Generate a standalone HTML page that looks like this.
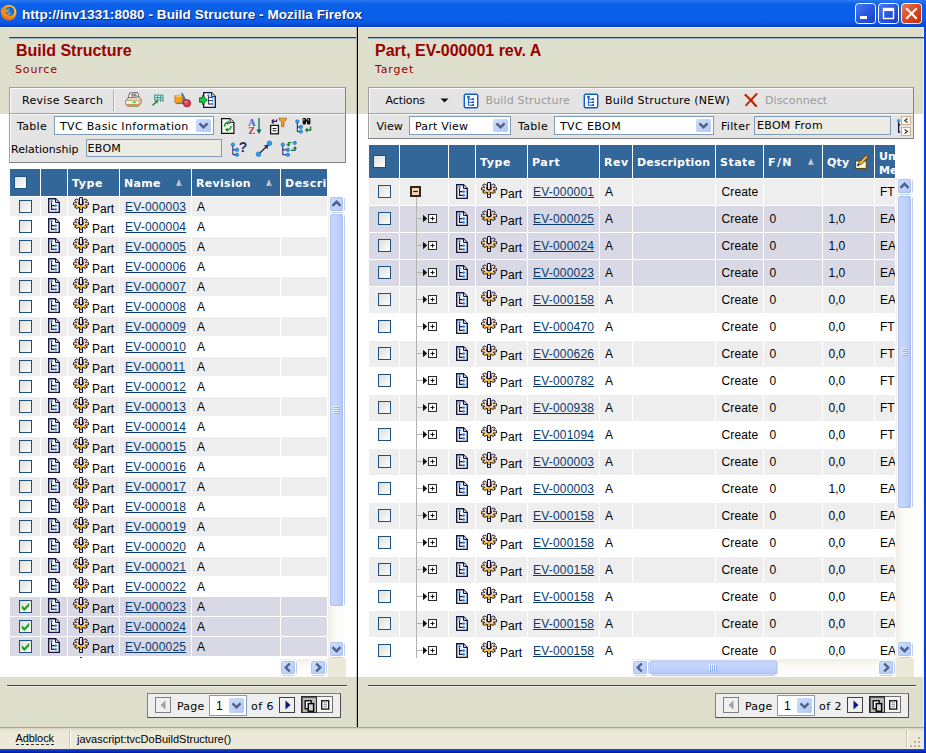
<!DOCTYPE html>
<html><head><meta charset="utf-8"><title>Build Structure - Mozilla Firefox</title>
<style>
html,body{margin:0;padding:0;background:#fff;}
#win{position:relative;width:926px;height:753px;overflow:hidden;background:#fff;font-family:"Liberation Sans",sans-serif;font-size:12px;color:#000;}
.t{position:absolute;white-space:nowrap;line-height:14px;}
.v{font-family:"DejaVu Sans","Liberation Sans",sans-serif;font-size:11px;}
.vb{font-family:"DejaVu Sans","Liberation Sans",sans-serif;font-size:11px;font-weight:bold;color:#fff;}
.a{font-family:"Liberation Sans",sans-serif;font-size:12px;}
.lnk{color:#083A70;text-decoration:underline;}
.dis{color:#9A9A9A;}
svg{display:block;overflow:visible}
</style></head><body><div id="win">

<svg width="0" height="0" style="position:absolute">
<defs>
<linearGradient id="gcb" x1="0" y1="0" x2="1" y2="1"><stop offset="0" stop-color="#DCDCD7"/><stop offset="1" stop-color="#FFFFFF"/></linearGradient>
<linearGradient id="gsb" x1="0" y1="0" x2="1" y2="0"><stop offset="0" stop-color="#C9D7FC"/><stop offset="0.5" stop-color="#C3D3FD"/><stop offset="1" stop-color="#B4C6F6"/></linearGradient>
<linearGradient id="gsbh" x1="0" y1="0" x2="0" y2="1"><stop offset="0" stop-color="#C9D7FC"/><stop offset="0.5" stop-color="#C3D3FD"/><stop offset="1" stop-color="#B4C6F6"/></linearGradient>
<linearGradient id="gbtn" x1="0" y1="0" x2="1" y2="1"><stop offset="0" stop-color="#CFDDFD"/><stop offset="0.5" stop-color="#C1D2FB"/><stop offset="1" stop-color="#B4C8F7"/></linearGradient>
<linearGradient id="gwb" x1="0" y1="0" x2="1" y2="1"><stop offset="0" stop-color="#4C7CF2"/><stop offset="0.5" stop-color="#2858E2"/><stop offset="1" stop-color="#1A3CC4"/></linearGradient>
<linearGradient id="gwc" x1="0" y1="0" x2="1" y2="1"><stop offset="0" stop-color="#EC8060"/><stop offset="0.45" stop-color="#DE4A22"/><stop offset="1" stop-color="#C02C08"/></linearGradient>
<radialGradient id="gff" cx="0.7" cy="0.3" r="0.9"><stop offset="0" stop-color="#FFD848"/><stop offset="0.45" stop-color="#F59A20"/><stop offset="1" stop-color="#D8500C"/></radialGradient>

<symbol id="cb" viewBox="0 0 13 13"><rect x="0.5" y="0.5" width="12" height="12" fill="url(#gcb)" stroke="#1C5180"/></symbol>
<symbol id="cbc" viewBox="0 0 13 13"><rect x="0.5" y="0.5" width="12" height="12" fill="url(#gcb)" stroke="#1C5180"/><path d="M2.8 5.2 L5.4 7.8 L10.2 2.8 V6 L5.4 11 L2.8 8.4 Z" fill="#1FA41F"/></symbol>
<symbol id="cbh" viewBox="0 0 13 13"><rect x="0.5" y="0.5" width="12" height="12" fill="url(#gcb)" stroke="#FFFFFF" stroke-opacity="0.9"/><rect x="0" y="0" width="13" height="13" fill="none" stroke="#5580AA" stroke-width="0.6"/></symbol>

<symbol id="doc" viewBox="0 0 12 15">
<path d="M0.7 0.7 H7.5 L11.3 4.5 V14.3 H0.7 Z" fill="#F6F6F6" stroke="#15153C" stroke-width="1.35" stroke-linejoin="miter"/>
<path d="M7.5 0.75 V4.5 H11.25" fill="#C8C8D8" stroke="#15153C" stroke-width="1"/>
<path d="M3.5 4 V11.4 H7 M3.5 7.6 H7" fill="none" stroke="#15153C" stroke-width="1.1"/>
<path d="M3.5 1.7 L5 3.3 L3.5 4.9 L2 3.3 Z M7.8 6 L9.4 7.6 L7.8 9.2 L6.2 7.6 Z M7.8 9.8 L9.4 11.4 L7.8 13 L6.2 11.4 Z" fill="#1E8CFF"/>
</symbol>

<symbol id="gear" viewBox="0 0 16 16">
<defs><radialGradient id="gg" gradientUnits="userSpaceOnUse" cx="0" cy="-3" r="9.6"><stop offset="0" stop-color="#FDE0BC"/><stop offset="0.68" stop-color="#FBD6A2"/><stop offset="0.84" stop-color="#F4BA1C"/><stop offset="1" stop-color="#F0B008"/></radialGradient></defs>
<g transform="translate(8 6.7) scale(1 0.76)">
<path d="M4.31 -5.87 L5.87 -4.31 L3.25 -1.27 L1.27 -3.25 Z M7.20 -1.10 L7.20 1.10 L3.20 1.40 L3.20 -1.40 Z M5.87 4.31 L4.31 5.87 L1.27 3.25 L3.25 1.27 Z M1.10 7.20 L-1.10 7.20 L-1.40 3.20 L1.40 3.20 Z M-4.31 5.87 L-5.87 4.31 L-3.25 1.27 L-1.27 3.25 Z M-7.20 1.10 L-7.20 -1.10 L-3.20 -1.40 L-3.20 1.40 Z M-5.87 -4.31 L-4.31 -5.87 L-1.27 -3.25 L-3.25 -1.27 Z" fill="#0C0C38" stroke="#0C0C38" stroke-width="1.7" stroke-linejoin="round"/>
<circle r="4.2" fill="#0C0C38" stroke="#0C0C38" stroke-width="1.7"/>
<path d="M4.31 -5.87 L5.87 -4.31 L3.25 -1.27 L1.27 -3.25 Z M7.20 -1.10 L7.20 1.10 L3.20 1.40 L3.20 -1.40 Z M5.87 4.31 L4.31 5.87 L1.27 3.25 L3.25 1.27 Z M1.10 7.20 L-1.10 7.20 L-1.40 3.20 L1.40 3.20 Z M-4.31 5.87 L-5.87 4.31 L-3.25 1.27 L-1.27 3.25 Z M-7.20 1.10 L-7.20 -1.10 L-3.20 -1.40 L-3.20 1.40 Z M-5.87 -4.31 L-4.31 -5.87 L-1.27 -3.25 L-3.25 -1.27 Z" fill="url(#gg)"/>
<circle r="4.2" fill="url(#gg)"/>
<path d="M-2.7 -3 V0.2 A2.7 2.3000000000000003 0 0 0 2.7 0.2 V-3 Z" fill="#0C0C38"/>
</g>
<rect x="6" y="0" width="4" height="8" rx="1.2" fill="#0C0C38"/>
<rect x="7" y="1" width="2" height="6" fill="#D0DCF6"/>
<rect x="7" y="1" width="0.9" height="6" fill="#F2F5FC"/>
<rect x="6" y="10.8" width="4" height="5.2" rx="1" fill="#0C0C38"/>
<rect x="7" y="9" width="2" height="3.4" fill="#F4BA1C"/>
<rect x="7" y="13" width="2" height="2" fill="#D4E0F8"/>
</symbol>

<symbol id="minus" viewBox="0 0 11 11"><rect x="1" y="1" width="9" height="9" fill="#FAD8B0" stroke="#2A2A2A" stroke-width="2"/><rect x="3.2" y="4.9" width="4.6" height="1.2" fill="#1A1A1A"/></symbol>
<symbol id="plus" viewBox="0 0 14 9"><path d="M0 0.8 L4.2 4.5 L0 8.2 Z" fill="#111"/><rect x="5.5" y="0.5" width="8" height="8" fill="#FFF" stroke="#2A2A2A" stroke-width="1"/><path d="M7.5 4.5 H11.5 M9.5 2.5 V6.5" stroke="#111" stroke-width="1"/></symbol>

<symbol id="sbu" viewBox="0 0 17 17"><rect x="0.5" y="0.5" width="16" height="16" rx="2" fill="url(#gbtn)" stroke="#FFFFFF"/><rect x="1" y="1" width="15" height="15" rx="2" fill="none" stroke="#B0C4F4" stroke-width="0.8"/><path d="M4.5 10.5 L8.5 6.5 L12.5 10.5" fill="none" stroke="#4D6185" stroke-width="2"/></symbol>
<symbol id="bs" viewBox="0 0 16 16"><path d="M2 0.6 H14 L15.4 2 V14 L14 15.4 H2 L0.6 14 V2 Z" fill="#0A5BCE"/><rect x="2" y="2" width="12" height="12" fill="#FFFFFF"/><path d="M5.3 4 V12.2 H10 M5.3 6.2 H10 M5.3 9.2 H10" fill="none" stroke="#0A4FC0" stroke-width="1"/><rect x="4" y="3.2" width="3" height="1.5" fill="#0A4FC0"/><rect x="9.3" y="5.3" width="1.8" height="1.8" fill="#0A4FC0"/><rect x="9.3" y="8.3" width="1.8" height="1.8" fill="#0A4FC0"/><rect x="9.3" y="11.2" width="1.8" height="1.8" fill="#0A4FC0"/></symbol>
<symbol id="redx" viewBox="0 0 14 14"><path d="M1.5 2 L7 7.2 L12 13" stroke="#CC2200" stroke-width="2.3" fill="none" stroke-linecap="round"/><path d="M12.6 1 L2.2 12.2" stroke="#CC2200" stroke-width="1.9" fill="none" stroke-linecap="round"/></symbol>
</defs></svg>
<div style="position:absolute;left:0px;top:0px;width:926px;height:27px;background:linear-gradient(to bottom,#2A78F0 0%,#1A6CF0 8%,#0A60EA 16%,#0A5EE8 60%,#0B5CE6 78%,#0A52DC 88%,#0A46CC 96%,#0A40C4 100%);"></div><svg style="position:absolute;left:0px;top:4px" width="17" height="17" viewBox="0 0 17 17"><circle cx="8.6" cy="8.6" r="7.9" fill="url(#gff)"/><circle cx="9.6" cy="7.4" r="4.7" fill="#2468C8"/><path d="M8 3.5 C9.5 4.5 10.5 6 9.5 8 C11 8 12 9 11.5 10.5 C10 11.5 8 11 7.5 9.5 C6.5 8 7 5 8 3.5 Z" fill="#3C9CE0"/><path d="M0.8 6 L2 3.2 L3.6 4.6 L5.6 3 L6.2 5.2 C7.8 5.6 8.6 7 8 8.4 C7 8 6 8.2 5.6 9 C6.6 10.2 8.6 10.6 10.4 9.8 C9.6 12 7 13 4.6 12.2 C2 11.2 0.4 8.6 0.8 6 Z" fill="#F08A1C"/><path d="M12.5 2 C15.5 4 16.6 8 15 11.5 C15.6 8.5 14.6 5 12.5 2 Z" fill="#FFD640"/></svg><span class="t " style="left:22px;top:7px;font-family:'Liberation Sans',sans-serif;font-weight:bold;font-size:13.5px;color:#fff;line-height:16px;letter-spacing:0.06px;text-shadow:1px 1px 0 #0A2A80;">http://inv1331:8080 - Build Structure - Mozilla Firefox</span><svg style="position:absolute;left:855px;top:3px" width="21" height="21" viewBox="0 0 21 21"><rect x="0.5" y="0.5" width="20" height="20" rx="3" fill="url(#gwb)" stroke="#FFFFFF"/><rect x="5" y="13" width="7" height="3" fill="#fff"/></svg><svg style="position:absolute;left:878px;top:3px" width="21" height="21" viewBox="0 0 21 21"><rect x="0.5" y="0.5" width="20" height="20" rx="3" fill="url(#gwb)" stroke="#FFFFFF"/><rect x="5.5" y="5.5" width="10" height="10" fill="none" stroke="#fff" stroke-width="1.4"/><rect x="5" y="5" width="11" height="3" fill="#fff"/></svg><svg style="position:absolute;left:901px;top:3px" width="21" height="21" viewBox="0 0 21 21"><rect x="0.5" y="0.5" width="20" height="20" rx="3" fill="url(#gwc)" stroke="#FFFFFF"/><path d="M6 6 L15 15 M15 6 L6 15" stroke="#fff" stroke-width="2.2" stroke-linecap="square"/></svg><div style="position:absolute;left:0px;top:27px;width:924px;height:87px;background:#DDDECC;border-top:1px solid #F1EFDC;box-sizing:border-box;"></div><div style="position:absolute;left:0px;top:677px;width:924px;height:50px;background:#DDDECC;"></div><div style="position:absolute;left:356px;top:27px;width:1px;height:700px;background:rgba(0,0,0,0.18);"></div><div style="position:absolute;left:357px;top:27px;width:1px;height:700px;background:#000;"></div><div style="position:absolute;left:923px;top:27px;width:1px;height:722px;background:#F4F1DC;"></div><div style="position:absolute;left:924px;top:27px;width:2px;height:726px;background:#0A3FE0;"></div><div style="position:absolute;left:0px;top:749px;width:926px;height:4px;background:linear-gradient(to bottom,#1A56F0,#0A32C8 40%,#001A9A);"></div><div style="position:absolute;left:9px;top:37px;width:347px;height:1px;background:#1A4A78;border-bottom:1px solid #9AB0C4;"></div><div style="position:absolute;left:368px;top:37px;width:556px;height:1px;background:#1A4A78;border-bottom:1px solid #9AB0C4;"></div><div style="position:absolute;left:7px;top:685px;width:340px;height:1px;background:#1A4A78;border-bottom:1px solid #F4F4EC;"></div><div style="position:absolute;left:368px;top:685px;width:548px;height:1px;background:#1A4A78;border-bottom:1px solid #F4F4EC;"></div><span class="t " style="left:16px;top:42px;font-family:'Liberation Sans',sans-serif;font-weight:bold;font-size:16px;color:#990000;line-height:18px;">Build Structure</span><span class="t v" style="left:15px;top:63px;color:#990000;letter-spacing:0.85px;">Source</span><span class="t " style="left:375px;top:42px;font-family:'Liberation Sans',sans-serif;font-weight:bold;font-size:16px;color:#990000;line-height:18px;">Part, EV-000001 rev. A</span><span class="t v" style="left:375px;top:63px;color:#990000;letter-spacing:0.85px;">Target</span><div style="position:absolute;left:9px;top:87px;width:337px;height:27px;background:#E4E4E4;border:1px solid #A0A0A0;border-bottom-color:#808080;border-right-color:#808080;box-sizing:border-box;box-shadow:inset 1px 1px 0 #FAFAFA;"></div><div style="position:absolute;left:9px;top:113px;width:337px;height:50px;background:#E4E4E4;border:1px solid #A0A0A0;border-bottom-color:#808080;border-right-color:#808080;box-sizing:border-box;box-shadow:inset 1px 1px 0 #FAFAFA;"></div><div style="position:absolute;left:113px;top:90px;width:1px;height:21px;background:#B0B0B0;border-right:1px solid #F8F8F8;"></div><span class="t v" style="left:22px;top:94px;letter-spacing:0.3px;">Revise Search</span><span class="t v" style="left:17px;top:120px;letter-spacing:0.3px;">Table</span><span class="t v" style="left:11px;top:143px;">Relationship</span><div style="position:absolute;left:54px;top:116px;width:160px;height:19px;background:#fff;border:1px solid #7F9DB9;box-sizing:border-box;"></div><span class="t v" style="left:60px;top:120px;letter-spacing:0.33px;">TVC Basic Information</span><svg style="position:absolute;left:196px;top:119px" width="15" height="13" viewBox="0 0 15 13"><rect x="0" y="0" width="15" height="13" rx="1.5" fill="url(#gbtn)"/><path d="M3.5 4.3 L7.5 8.3 L11.5 4.3" fill="none" stroke="#4D6185" stroke-width="2.5"/></svg><div style="position:absolute;left:86px;top:139px;width:136px;height:18px;background:#ECEBE4;border:1px solid #7F9DB9;box-sizing:border-box;"></div><span class="t v" style="left:87.5px;top:142px;letter-spacing:0.3px;">EBOM</span><svg style="position:absolute;left:125px;top:92px" width="17" height="15" viewBox="0 0 17 15"><path d="M4.6 1 L12.4 0.5 L14.2 5 L3.2 5.8 Z" fill="#FFFFFF" stroke="#444" stroke-width="0.8"/><path d="M6.4 2.4 L11.2 2.1 M6 4 L11.8 3.7" stroke="#333" stroke-width="0.8"/><path d="M0.7 8.6 L3.2 5.8 L14.2 5 L16.4 7.4 L16.4 10.6 L13.6 14.3 L2.6 14.3 L0.7 12 Z" fill="#EAD9B8" stroke="#8A6A3A" stroke-width="0.8" stroke-linejoin="round"/><path d="M0.9 8.8 H13.4 L16.2 7.5" fill="none" stroke="#8A6A3A" stroke-width="0.6"/><path d="M1.2 9 H13.4 V11.8 H1.2 Z" fill="#F2F2EE"/><path d="M13.5 9 L16.2 7.7 V10.5 L13.5 11.8 Z" fill="#D8C4A0"/><rect x="7.6" y="9.6" width="3.2" height="1.5" fill="#22CC44"/><path d="M1 12 H13.5 L16.2 10.6 L13.6 14.2 H2.7 Z" fill="#C9975C"/></svg><svg style="position:absolute;left:152px;top:94px" width="12" height="12" viewBox="0 0 12 12"><rect x="2" y="0.6" width="9.4" height="7.4" fill="#E6F4F0"/><path d="M2 1.2 H11.4 M2 3.6 H11.4 M2 6 H11.4 M2.6 0.6 V6.6 M5.6 0.6 V8 M8.6 0.6 V8 M11 0.6 V8" stroke="#4FA394" stroke-width="1.2" fill="none"/><path d="M0.6 11.4 L5 7" stroke="#1F7A3A" stroke-width="1.4"/><path d="M2.4 6.4 H5.6 V9.6 Z" fill="#1F7A3A"/></svg><svg style="position:absolute;left:174px;top:92px" width="18" height="16" viewBox="0 0 18 16"><path d="M8 0.8 L12.6 9 L8 12 Z" fill="#2E86D0" stroke="#1A4A90" stroke-width="0.5"/><path d="M8 0.8 L8 12 L5.5 9 Z" fill="#60B0E8"/><path d="M0.8 3.6 L6.8 3 L8.6 4.6 V10.6 L2.6 11.2 L0.8 9.6 Z" fill="#F5A21A" stroke="#B06A08" stroke-width="0.6"/><path d="M0.8 3.6 L6.8 3 L8.6 4.6 L2.6 5.2 Z" fill="#FBC65A"/><path d="M0.8 9.6 L2.6 11.2 L8.6 10.6 L8.6 11.6 L2.8 12.2 L0.8 10.4 Z" fill="#3A78C8"/><circle cx="13" cy="11.2" r="3.7" fill="#E23A50" stroke="#8E1424" stroke-width="0.7"/><circle cx="12" cy="10" r="1.3" fill="#F08A98"/></svg><svg style="position:absolute;left:199px;top:92px" width="18" height="16" viewBox="0 0 18 16"><path d="M4.7 0.7 H12.5 L16.3 4.5 V15.3 H4.7 Z" fill="#F8F8F8" stroke="#15153C" stroke-width="1.3"/><path d="M12.5 0.7 V4.5 H16.3" fill="#D0D0DC" stroke="#15153C" stroke-width="0.9"/><path d="M9.4 3.6 V12.4 M9.4 5.4 H13 M9.4 8.6 H13 M9.4 12 H13" fill="none" stroke="#15153C" stroke-width="0.9"/><path d="M9.4 2 L10.7 3.3 L9.4 4.6 L8.1 3.3 Z M13.4 4.1 L14.7 5.4 L13.4 6.7 L12.1 5.4 Z M13.4 7.3 L14.7 8.6 L13.4 9.9 L12.1 8.6 Z M13.4 10.7 L14.7 12 L13.4 13.3 L12.1 12 Z" fill="#1E8CFF"/><path d="M0.6 5.8 H3.6 V3.2 L8.2 8 L3.6 12.8 V10.2 H0.6 Z" fill="#1CCB3A" stroke="#0C5A1A" stroke-width="0.9" stroke-linejoin="round"/></svg><svg style="position:absolute;left:221px;top:118px" width="14" height="16" viewBox="0 0 14 16"><path d="M0.6 0.6 H9 L12.9 4.5 V15.4 H0.6 Z" fill="#FAFAFA" stroke="#111" stroke-width="1.2"/><path d="M9 0.6 V4.5 H12.9" fill="#D8D8D8" stroke="#111" stroke-width="0.8"/><path d="M3.6 8.6 A3.1 3.3 0 0 1 7.4 4.8 M9.8 8 A3.1 3.3 0 0 1 6 11.8" fill="none" stroke="#16A024" stroke-width="1.7"/><path d="M6.6 2.6 L9.6 5.2 L6.2 7 Z M6.8 14 L3.8 11.4 L7.2 9.6 Z" fill="#16A024"/></svg><svg style="position:absolute;left:248px;top:117px" width="15" height="18" viewBox="0 0 15 18"><text x="0" y="8.6" font-family="Liberation Serif,serif" font-weight="bold" font-size="10.5" fill="#3D62DD">A</text><text x="0.3" y="17" font-family="Liberation Serif,serif" font-weight="bold" font-size="10.5" fill="#CC3344">Z</text><path d="M11 1 V15.5" stroke="#0A6A5A" stroke-width="1.3"/><path d="M8.4 12.6 L11 17 L13.6 12.6 Z" fill="#0A6A5A"/></svg><svg style="position:absolute;left:269px;top:117px" width="19" height="18" viewBox="0 0 19 18"><rect x="1.6" y="8.4" width="7.8" height="8.4" fill="#fff" stroke="#111" stroke-width="1.3"/><path d="M3.6 11.6 H7.4 M3.6 13.8 H7.4" stroke="#111" stroke-width="1"/><path d="M2.6 4.4 H8 M2.6 4.4 L4.8 2.4 M2.6 4.4 L4.8 6.4 M7.6 2.4 V4.4" stroke="#3A1A7A" stroke-width="1.3" fill="none"/><path d="M10 1.2 H17.4 V2.8 L15 4.6 V9.6 H12.6 V4.6 L10 2.8 Z" fill="#F2A030" stroke="#9A5E10" stroke-width="0.7"/></svg><svg style="position:absolute;left:295px;top:117px" width="18" height="18" viewBox="0 0 18 18"><path d="M2.3 4.5 V14.6 H5.7 M2.3 10 H5.7" fill="none" stroke="#1A1A6A" stroke-width="1"/><circle cx="2.3" cy="4.5" r="1.7" fill="#22A4F4" stroke="#1458B8" stroke-width="0.6"/><circle cx="5.9" cy="10" r="1.7" fill="#22A4F4" stroke="#1458B8" stroke-width="0.6"/><circle cx="5.9" cy="14.6" r="1.7" fill="#22A4F4" stroke="#1458B8" stroke-width="0.6"/><rect x="7.6" y="1" width="3.4" height="6.4" rx="0.8" fill="#111"/><rect x="12" y="1" width="3.4" height="6.4" rx="0.8" fill="#111"/><rect x="10" y="2.4" width="3" height="2.4" fill="#111"/><rect x="8.4" y="2" width="1" height="1.6" fill="#ddd"/><rect x="12.8" y="2" width="1" height="1.6" fill="#ddd"/><path d="M15.6 9.6 V13 H11" fill="none" stroke="#1A7A2A" stroke-width="1.4"/><path d="M12.6 10.6 L9.8 13 L12.6 15.4 Z" fill="#1A7A2A"/></svg><svg style="position:absolute;left:231px;top:140px" width="18" height="18" viewBox="0 0 18 18"><path d="M1.9 4.6 V14.8 H5.8 M1.9 9.8 H5.8" fill="none" stroke="#1A1A6A" stroke-width="1"/><circle cx="1.9" cy="4.6" r="1.7" fill="#22A4F4" stroke="#1458B8" stroke-width="0.6"/><circle cx="6" cy="9.8" r="1.7" fill="#22A4F4" stroke="#1458B8" stroke-width="0.6"/><circle cx="6" cy="14.8" r="1.7" fill="#22A4F4" stroke="#1458B8" stroke-width="0.6"/><text x="7.8" y="11.6" font-family="Liberation Sans,sans-serif" font-weight="bold" font-size="14" fill="#2A2A70">?</text></svg><svg style="position:absolute;left:255px;top:140px" width="18" height="18" viewBox="0 0 18 18"><path d="M3.6 14.4 L13 5" stroke="#111" stroke-width="1.2"/><path d="M8.6 5.6 L13.6 4.4 L12.4 9.4 L11 7 Z" fill="#1A2A9A"/><circle cx="3.5" cy="14.3" r="2.3" fill="#22A4F4" stroke="#1458B8" stroke-width="0.6"/><circle cx="14.5" cy="3.3" r="2.3" fill="#22A4F4" stroke="#1458B8" stroke-width="0.6"/></svg><svg style="position:absolute;left:281px;top:140px" width="18" height="18" viewBox="0 0 18 18"><path d="M1.8 4.6 V14.8 H6.6 M1.8 9.8 H6.6" fill="none" stroke="#1A1A6A" stroke-width="1"/><circle cx="1.8" cy="4.6" r="1.7" fill="#22A4F4" stroke="#1458B8" stroke-width="0.6"/><circle cx="6.9" cy="9.8" r="1.7" fill="#22A4F4" stroke="#1458B8" stroke-width="0.6"/><circle cx="6.9" cy="14.8" r="1.7" fill="#22A4F4" stroke="#1458B8" stroke-width="0.6"/><circle cx="13.8" cy="2.9" r="1.6" fill="#22A4F4" stroke="#1458B8" stroke-width="0.6"/><path d="M10.6 2.6 H7.4 V5" stroke="#1A7A3A" stroke-width="1.3" fill="none"/><path d="M5.2 4.2 H9.6 L7.4 6.8 Z" fill="#1A7A3A"/><path d="M10 10.4 H14 V8.6" stroke="#0A6A4A" stroke-width="1.3" fill="none"/><path d="M11.8 8.8 H16.2 L14 6.2 Z" fill="#0A6A4A"/></svg><div style="position:absolute;left:10px;top:169px;width:30px;height:27px;background:#336699;"></div><div style="position:absolute;left:41px;top:169px;width:26px;height:27px;background:#336699;"></div><div style="position:absolute;left:68px;top:169px;width:51px;height:27px;background:#336699;"></div><div style="position:absolute;left:120px;top:169px;width:71px;height:27px;background:#336699;"></div><div style="position:absolute;left:192px;top:169px;width:88px;height:27px;background:#336699;"></div><div style="position:absolute;left:281px;top:169px;width:46px;height:27px;background:#336699;"></div><svg style="position:absolute;left:14px;top:176px" width="13" height="13" ><use href="#cb"/></svg><span class="t vb" style="left:72px;top:177px;letter-spacing:0.6px;">Type</span><span class="t vb" style="left:124px;top:177px;letter-spacing:0.3px;">Name</span><span class="t vb" style="left:196px;top:177px;letter-spacing:0.3px;">Revision</span><span class="t vb" style="left:285px;top:177px;letter-spacing:0.5px;">Descri</span><svg style="position:absolute;left:176px;top:179px" width="6" height="7" viewBox="0 0 6 7"><path d="M3 0.3 L5.8 6.8 H0.2 Z" fill="#D4D4D0"/><path d="M3 0.3 L5.8 6.8 H3.6 Z" fill="#A8A8A8"/></svg><svg style="position:absolute;left:266px;top:179px" width="6" height="7" viewBox="0 0 6 7"><path d="M3 0.3 L5.8 6.8 H0.2 Z" fill="#D4D4D0"/><path d="M3 0.3 L5.8 6.8 H3.6 Z" fill="#A8A8A8"/></svg><div style="position:absolute;left:10px;top:197px;width:30px;height:19px;background:#EEEEEE;"></div><div style="position:absolute;left:41px;top:197px;width:26px;height:19px;background:#EEEEEE;"></div><div style="position:absolute;left:68px;top:197px;width:51px;height:19px;background:#EEEEEE;"></div><div style="position:absolute;left:120px;top:197px;width:71px;height:19px;background:#EEEEEE;"></div><div style="position:absolute;left:192px;top:197px;width:88px;height:19px;background:#EEEEEE;"></div><div style="position:absolute;left:281px;top:197px;width:46px;height:19px;background:#EEEEEE;"></div><svg style="position:absolute;left:19px;top:200px" width="13" height="13" ><use href="#cb"/></svg><svg style="position:absolute;left:48px;top:198px" width="12" height="15" ><use href="#doc"/></svg><svg style="position:absolute;left:73px;top:197px" width="16" height="16" ><use href="#gear"/></svg><span class="t a" style="left:92px;top:202px;">Part</span><span class="t a lnk" style="left:125px;top:200px;letter-spacing:0.2px;">EV-000003</span><span class="t a" style="left:197px;top:200px;">A</span><div style="position:absolute;left:10px;top:217px;width:30px;height:19px;background:#FFFFFF;"></div><div style="position:absolute;left:41px;top:217px;width:26px;height:19px;background:#FFFFFF;"></div><div style="position:absolute;left:68px;top:217px;width:51px;height:19px;background:#FFFFFF;"></div><div style="position:absolute;left:120px;top:217px;width:71px;height:19px;background:#FFFFFF;"></div><div style="position:absolute;left:192px;top:217px;width:88px;height:19px;background:#FFFFFF;"></div><div style="position:absolute;left:281px;top:217px;width:46px;height:19px;background:#FFFFFF;"></div><svg style="position:absolute;left:19px;top:220px" width="13" height="13" ><use href="#cb"/></svg><svg style="position:absolute;left:48px;top:218px" width="12" height="15" ><use href="#doc"/></svg><svg style="position:absolute;left:73px;top:217px" width="16" height="16" ><use href="#gear"/></svg><span class="t a" style="left:92px;top:222px;">Part</span><span class="t a lnk" style="left:125px;top:220px;letter-spacing:0.2px;">EV-000004</span><span class="t a" style="left:197px;top:220px;">A</span><div style="position:absolute;left:10px;top:237px;width:30px;height:19px;background:#EEEEEE;"></div><div style="position:absolute;left:41px;top:237px;width:26px;height:19px;background:#EEEEEE;"></div><div style="position:absolute;left:68px;top:237px;width:51px;height:19px;background:#EEEEEE;"></div><div style="position:absolute;left:120px;top:237px;width:71px;height:19px;background:#EEEEEE;"></div><div style="position:absolute;left:192px;top:237px;width:88px;height:19px;background:#EEEEEE;"></div><div style="position:absolute;left:281px;top:237px;width:46px;height:19px;background:#EEEEEE;"></div><svg style="position:absolute;left:19px;top:240px" width="13" height="13" ><use href="#cb"/></svg><svg style="position:absolute;left:48px;top:238px" width="12" height="15" ><use href="#doc"/></svg><svg style="position:absolute;left:73px;top:237px" width="16" height="16" ><use href="#gear"/></svg><span class="t a" style="left:92px;top:242px;">Part</span><span class="t a lnk" style="left:125px;top:240px;letter-spacing:0.2px;">EV-000005</span><span class="t a" style="left:197px;top:240px;">A</span><div style="position:absolute;left:10px;top:257px;width:30px;height:19px;background:#FFFFFF;"></div><div style="position:absolute;left:41px;top:257px;width:26px;height:19px;background:#FFFFFF;"></div><div style="position:absolute;left:68px;top:257px;width:51px;height:19px;background:#FFFFFF;"></div><div style="position:absolute;left:120px;top:257px;width:71px;height:19px;background:#FFFFFF;"></div><div style="position:absolute;left:192px;top:257px;width:88px;height:19px;background:#FFFFFF;"></div><div style="position:absolute;left:281px;top:257px;width:46px;height:19px;background:#FFFFFF;"></div><svg style="position:absolute;left:19px;top:260px" width="13" height="13" ><use href="#cb"/></svg><svg style="position:absolute;left:48px;top:258px" width="12" height="15" ><use href="#doc"/></svg><svg style="position:absolute;left:73px;top:257px" width="16" height="16" ><use href="#gear"/></svg><span class="t a" style="left:92px;top:262px;">Part</span><span class="t a lnk" style="left:125px;top:260px;letter-spacing:0.2px;">EV-000006</span><span class="t a" style="left:197px;top:260px;">A</span><div style="position:absolute;left:10px;top:277px;width:30px;height:19px;background:#EEEEEE;"></div><div style="position:absolute;left:41px;top:277px;width:26px;height:19px;background:#EEEEEE;"></div><div style="position:absolute;left:68px;top:277px;width:51px;height:19px;background:#EEEEEE;"></div><div style="position:absolute;left:120px;top:277px;width:71px;height:19px;background:#EEEEEE;"></div><div style="position:absolute;left:192px;top:277px;width:88px;height:19px;background:#EEEEEE;"></div><div style="position:absolute;left:281px;top:277px;width:46px;height:19px;background:#EEEEEE;"></div><svg style="position:absolute;left:19px;top:280px" width="13" height="13" ><use href="#cb"/></svg><svg style="position:absolute;left:48px;top:278px" width="12" height="15" ><use href="#doc"/></svg><svg style="position:absolute;left:73px;top:277px" width="16" height="16" ><use href="#gear"/></svg><span class="t a" style="left:92px;top:282px;">Part</span><span class="t a lnk" style="left:125px;top:280px;letter-spacing:0.2px;">EV-000007</span><span class="t a" style="left:197px;top:280px;">A</span><div style="position:absolute;left:10px;top:297px;width:30px;height:19px;background:#FFFFFF;"></div><div style="position:absolute;left:41px;top:297px;width:26px;height:19px;background:#FFFFFF;"></div><div style="position:absolute;left:68px;top:297px;width:51px;height:19px;background:#FFFFFF;"></div><div style="position:absolute;left:120px;top:297px;width:71px;height:19px;background:#FFFFFF;"></div><div style="position:absolute;left:192px;top:297px;width:88px;height:19px;background:#FFFFFF;"></div><div style="position:absolute;left:281px;top:297px;width:46px;height:19px;background:#FFFFFF;"></div><svg style="position:absolute;left:19px;top:300px" width="13" height="13" ><use href="#cb"/></svg><svg style="position:absolute;left:48px;top:298px" width="12" height="15" ><use href="#doc"/></svg><svg style="position:absolute;left:73px;top:297px" width="16" height="16" ><use href="#gear"/></svg><span class="t a" style="left:92px;top:302px;">Part</span><span class="t a lnk" style="left:125px;top:300px;letter-spacing:0.2px;">EV-000008</span><span class="t a" style="left:197px;top:300px;">A</span><div style="position:absolute;left:10px;top:317px;width:30px;height:19px;background:#EEEEEE;"></div><div style="position:absolute;left:41px;top:317px;width:26px;height:19px;background:#EEEEEE;"></div><div style="position:absolute;left:68px;top:317px;width:51px;height:19px;background:#EEEEEE;"></div><div style="position:absolute;left:120px;top:317px;width:71px;height:19px;background:#EEEEEE;"></div><div style="position:absolute;left:192px;top:317px;width:88px;height:19px;background:#EEEEEE;"></div><div style="position:absolute;left:281px;top:317px;width:46px;height:19px;background:#EEEEEE;"></div><svg style="position:absolute;left:19px;top:320px" width="13" height="13" ><use href="#cb"/></svg><svg style="position:absolute;left:48px;top:318px" width="12" height="15" ><use href="#doc"/></svg><svg style="position:absolute;left:73px;top:317px" width="16" height="16" ><use href="#gear"/></svg><span class="t a" style="left:92px;top:322px;">Part</span><span class="t a lnk" style="left:125px;top:320px;letter-spacing:0.2px;">EV-000009</span><span class="t a" style="left:197px;top:320px;">A</span><div style="position:absolute;left:10px;top:337px;width:30px;height:19px;background:#FFFFFF;"></div><div style="position:absolute;left:41px;top:337px;width:26px;height:19px;background:#FFFFFF;"></div><div style="position:absolute;left:68px;top:337px;width:51px;height:19px;background:#FFFFFF;"></div><div style="position:absolute;left:120px;top:337px;width:71px;height:19px;background:#FFFFFF;"></div><div style="position:absolute;left:192px;top:337px;width:88px;height:19px;background:#FFFFFF;"></div><div style="position:absolute;left:281px;top:337px;width:46px;height:19px;background:#FFFFFF;"></div><svg style="position:absolute;left:19px;top:340px" width="13" height="13" ><use href="#cb"/></svg><svg style="position:absolute;left:48px;top:338px" width="12" height="15" ><use href="#doc"/></svg><svg style="position:absolute;left:73px;top:337px" width="16" height="16" ><use href="#gear"/></svg><span class="t a" style="left:92px;top:342px;">Part</span><span class="t a lnk" style="left:125px;top:340px;letter-spacing:0.2px;">EV-000010</span><span class="t a" style="left:197px;top:340px;">A</span><div style="position:absolute;left:10px;top:357px;width:30px;height:19px;background:#EEEEEE;"></div><div style="position:absolute;left:41px;top:357px;width:26px;height:19px;background:#EEEEEE;"></div><div style="position:absolute;left:68px;top:357px;width:51px;height:19px;background:#EEEEEE;"></div><div style="position:absolute;left:120px;top:357px;width:71px;height:19px;background:#EEEEEE;"></div><div style="position:absolute;left:192px;top:357px;width:88px;height:19px;background:#EEEEEE;"></div><div style="position:absolute;left:281px;top:357px;width:46px;height:19px;background:#EEEEEE;"></div><svg style="position:absolute;left:19px;top:360px" width="13" height="13" ><use href="#cb"/></svg><svg style="position:absolute;left:48px;top:358px" width="12" height="15" ><use href="#doc"/></svg><svg style="position:absolute;left:73px;top:357px" width="16" height="16" ><use href="#gear"/></svg><span class="t a" style="left:92px;top:362px;">Part</span><span class="t a lnk" style="left:125px;top:360px;letter-spacing:0.2px;">EV-000011</span><span class="t a" style="left:197px;top:360px;">A</span><div style="position:absolute;left:10px;top:377px;width:30px;height:19px;background:#FFFFFF;"></div><div style="position:absolute;left:41px;top:377px;width:26px;height:19px;background:#FFFFFF;"></div><div style="position:absolute;left:68px;top:377px;width:51px;height:19px;background:#FFFFFF;"></div><div style="position:absolute;left:120px;top:377px;width:71px;height:19px;background:#FFFFFF;"></div><div style="position:absolute;left:192px;top:377px;width:88px;height:19px;background:#FFFFFF;"></div><div style="position:absolute;left:281px;top:377px;width:46px;height:19px;background:#FFFFFF;"></div><svg style="position:absolute;left:19px;top:380px" width="13" height="13" ><use href="#cb"/></svg><svg style="position:absolute;left:48px;top:378px" width="12" height="15" ><use href="#doc"/></svg><svg style="position:absolute;left:73px;top:377px" width="16" height="16" ><use href="#gear"/></svg><span class="t a" style="left:92px;top:382px;">Part</span><span class="t a lnk" style="left:125px;top:380px;letter-spacing:0.2px;">EV-000012</span><span class="t a" style="left:197px;top:380px;">A</span><div style="position:absolute;left:10px;top:397px;width:30px;height:19px;background:#EEEEEE;"></div><div style="position:absolute;left:41px;top:397px;width:26px;height:19px;background:#EEEEEE;"></div><div style="position:absolute;left:68px;top:397px;width:51px;height:19px;background:#EEEEEE;"></div><div style="position:absolute;left:120px;top:397px;width:71px;height:19px;background:#EEEEEE;"></div><div style="position:absolute;left:192px;top:397px;width:88px;height:19px;background:#EEEEEE;"></div><div style="position:absolute;left:281px;top:397px;width:46px;height:19px;background:#EEEEEE;"></div><svg style="position:absolute;left:19px;top:400px" width="13" height="13" ><use href="#cb"/></svg><svg style="position:absolute;left:48px;top:398px" width="12" height="15" ><use href="#doc"/></svg><svg style="position:absolute;left:73px;top:397px" width="16" height="16" ><use href="#gear"/></svg><span class="t a" style="left:92px;top:402px;">Part</span><span class="t a lnk" style="left:125px;top:400px;letter-spacing:0.2px;">EV-000013</span><span class="t a" style="left:197px;top:400px;">A</span><div style="position:absolute;left:10px;top:417px;width:30px;height:19px;background:#FFFFFF;"></div><div style="position:absolute;left:41px;top:417px;width:26px;height:19px;background:#FFFFFF;"></div><div style="position:absolute;left:68px;top:417px;width:51px;height:19px;background:#FFFFFF;"></div><div style="position:absolute;left:120px;top:417px;width:71px;height:19px;background:#FFFFFF;"></div><div style="position:absolute;left:192px;top:417px;width:88px;height:19px;background:#FFFFFF;"></div><div style="position:absolute;left:281px;top:417px;width:46px;height:19px;background:#FFFFFF;"></div><svg style="position:absolute;left:19px;top:420px" width="13" height="13" ><use href="#cb"/></svg><svg style="position:absolute;left:48px;top:418px" width="12" height="15" ><use href="#doc"/></svg><svg style="position:absolute;left:73px;top:417px" width="16" height="16" ><use href="#gear"/></svg><span class="t a" style="left:92px;top:422px;">Part</span><span class="t a lnk" style="left:125px;top:420px;letter-spacing:0.2px;">EV-000014</span><span class="t a" style="left:197px;top:420px;">A</span><div style="position:absolute;left:10px;top:437px;width:30px;height:19px;background:#EEEEEE;"></div><div style="position:absolute;left:41px;top:437px;width:26px;height:19px;background:#EEEEEE;"></div><div style="position:absolute;left:68px;top:437px;width:51px;height:19px;background:#EEEEEE;"></div><div style="position:absolute;left:120px;top:437px;width:71px;height:19px;background:#EEEEEE;"></div><div style="position:absolute;left:192px;top:437px;width:88px;height:19px;background:#EEEEEE;"></div><div style="position:absolute;left:281px;top:437px;width:46px;height:19px;background:#EEEEEE;"></div><svg style="position:absolute;left:19px;top:440px" width="13" height="13" ><use href="#cb"/></svg><svg style="position:absolute;left:48px;top:438px" width="12" height="15" ><use href="#doc"/></svg><svg style="position:absolute;left:73px;top:437px" width="16" height="16" ><use href="#gear"/></svg><span class="t a" style="left:92px;top:442px;">Part</span><span class="t a lnk" style="left:125px;top:440px;letter-spacing:0.2px;">EV-000015</span><span class="t a" style="left:197px;top:440px;">A</span><div style="position:absolute;left:10px;top:457px;width:30px;height:19px;background:#FFFFFF;"></div><div style="position:absolute;left:41px;top:457px;width:26px;height:19px;background:#FFFFFF;"></div><div style="position:absolute;left:68px;top:457px;width:51px;height:19px;background:#FFFFFF;"></div><div style="position:absolute;left:120px;top:457px;width:71px;height:19px;background:#FFFFFF;"></div><div style="position:absolute;left:192px;top:457px;width:88px;height:19px;background:#FFFFFF;"></div><div style="position:absolute;left:281px;top:457px;width:46px;height:19px;background:#FFFFFF;"></div><svg style="position:absolute;left:19px;top:460px" width="13" height="13" ><use href="#cb"/></svg><svg style="position:absolute;left:48px;top:458px" width="12" height="15" ><use href="#doc"/></svg><svg style="position:absolute;left:73px;top:457px" width="16" height="16" ><use href="#gear"/></svg><span class="t a" style="left:92px;top:462px;">Part</span><span class="t a lnk" style="left:125px;top:460px;letter-spacing:0.2px;">EV-000016</span><span class="t a" style="left:197px;top:460px;">A</span><div style="position:absolute;left:10px;top:477px;width:30px;height:19px;background:#EEEEEE;"></div><div style="position:absolute;left:41px;top:477px;width:26px;height:19px;background:#EEEEEE;"></div><div style="position:absolute;left:68px;top:477px;width:51px;height:19px;background:#EEEEEE;"></div><div style="position:absolute;left:120px;top:477px;width:71px;height:19px;background:#EEEEEE;"></div><div style="position:absolute;left:192px;top:477px;width:88px;height:19px;background:#EEEEEE;"></div><div style="position:absolute;left:281px;top:477px;width:46px;height:19px;background:#EEEEEE;"></div><svg style="position:absolute;left:19px;top:480px" width="13" height="13" ><use href="#cb"/></svg><svg style="position:absolute;left:48px;top:478px" width="12" height="15" ><use href="#doc"/></svg><svg style="position:absolute;left:73px;top:477px" width="16" height="16" ><use href="#gear"/></svg><span class="t a" style="left:92px;top:482px;">Part</span><span class="t a lnk" style="left:125px;top:480px;letter-spacing:0.2px;">EV-000017</span><span class="t a" style="left:197px;top:480px;">A</span><div style="position:absolute;left:10px;top:497px;width:30px;height:19px;background:#FFFFFF;"></div><div style="position:absolute;left:41px;top:497px;width:26px;height:19px;background:#FFFFFF;"></div><div style="position:absolute;left:68px;top:497px;width:51px;height:19px;background:#FFFFFF;"></div><div style="position:absolute;left:120px;top:497px;width:71px;height:19px;background:#FFFFFF;"></div><div style="position:absolute;left:192px;top:497px;width:88px;height:19px;background:#FFFFFF;"></div><div style="position:absolute;left:281px;top:497px;width:46px;height:19px;background:#FFFFFF;"></div><svg style="position:absolute;left:19px;top:500px" width="13" height="13" ><use href="#cb"/></svg><svg style="position:absolute;left:48px;top:498px" width="12" height="15" ><use href="#doc"/></svg><svg style="position:absolute;left:73px;top:497px" width="16" height="16" ><use href="#gear"/></svg><span class="t a" style="left:92px;top:502px;">Part</span><span class="t a lnk" style="left:125px;top:500px;letter-spacing:0.2px;">EV-000018</span><span class="t a" style="left:197px;top:500px;">A</span><div style="position:absolute;left:10px;top:517px;width:30px;height:19px;background:#EEEEEE;"></div><div style="position:absolute;left:41px;top:517px;width:26px;height:19px;background:#EEEEEE;"></div><div style="position:absolute;left:68px;top:517px;width:51px;height:19px;background:#EEEEEE;"></div><div style="position:absolute;left:120px;top:517px;width:71px;height:19px;background:#EEEEEE;"></div><div style="position:absolute;left:192px;top:517px;width:88px;height:19px;background:#EEEEEE;"></div><div style="position:absolute;left:281px;top:517px;width:46px;height:19px;background:#EEEEEE;"></div><svg style="position:absolute;left:19px;top:520px" width="13" height="13" ><use href="#cb"/></svg><svg style="position:absolute;left:48px;top:518px" width="12" height="15" ><use href="#doc"/></svg><svg style="position:absolute;left:73px;top:517px" width="16" height="16" ><use href="#gear"/></svg><span class="t a" style="left:92px;top:522px;">Part</span><span class="t a lnk" style="left:125px;top:520px;letter-spacing:0.2px;">EV-000019</span><span class="t a" style="left:197px;top:520px;">A</span><div style="position:absolute;left:10px;top:537px;width:30px;height:19px;background:#FFFFFF;"></div><div style="position:absolute;left:41px;top:537px;width:26px;height:19px;background:#FFFFFF;"></div><div style="position:absolute;left:68px;top:537px;width:51px;height:19px;background:#FFFFFF;"></div><div style="position:absolute;left:120px;top:537px;width:71px;height:19px;background:#FFFFFF;"></div><div style="position:absolute;left:192px;top:537px;width:88px;height:19px;background:#FFFFFF;"></div><div style="position:absolute;left:281px;top:537px;width:46px;height:19px;background:#FFFFFF;"></div><svg style="position:absolute;left:19px;top:540px" width="13" height="13" ><use href="#cb"/></svg><svg style="position:absolute;left:48px;top:538px" width="12" height="15" ><use href="#doc"/></svg><svg style="position:absolute;left:73px;top:537px" width="16" height="16" ><use href="#gear"/></svg><span class="t a" style="left:92px;top:542px;">Part</span><span class="t a lnk" style="left:125px;top:540px;letter-spacing:0.2px;">EV-000020</span><span class="t a" style="left:197px;top:540px;">A</span><div style="position:absolute;left:10px;top:557px;width:30px;height:19px;background:#EEEEEE;"></div><div style="position:absolute;left:41px;top:557px;width:26px;height:19px;background:#EEEEEE;"></div><div style="position:absolute;left:68px;top:557px;width:51px;height:19px;background:#EEEEEE;"></div><div style="position:absolute;left:120px;top:557px;width:71px;height:19px;background:#EEEEEE;"></div><div style="position:absolute;left:192px;top:557px;width:88px;height:19px;background:#EEEEEE;"></div><div style="position:absolute;left:281px;top:557px;width:46px;height:19px;background:#EEEEEE;"></div><svg style="position:absolute;left:19px;top:560px" width="13" height="13" ><use href="#cb"/></svg><svg style="position:absolute;left:48px;top:558px" width="12" height="15" ><use href="#doc"/></svg><svg style="position:absolute;left:73px;top:557px" width="16" height="16" ><use href="#gear"/></svg><span class="t a" style="left:92px;top:562px;">Part</span><span class="t a lnk" style="left:125px;top:560px;letter-spacing:0.2px;">EV-000021</span><span class="t a" style="left:197px;top:560px;">A</span><div style="position:absolute;left:10px;top:577px;width:30px;height:19px;background:#FFFFFF;"></div><div style="position:absolute;left:41px;top:577px;width:26px;height:19px;background:#FFFFFF;"></div><div style="position:absolute;left:68px;top:577px;width:51px;height:19px;background:#FFFFFF;"></div><div style="position:absolute;left:120px;top:577px;width:71px;height:19px;background:#FFFFFF;"></div><div style="position:absolute;left:192px;top:577px;width:88px;height:19px;background:#FFFFFF;"></div><div style="position:absolute;left:281px;top:577px;width:46px;height:19px;background:#FFFFFF;"></div><svg style="position:absolute;left:19px;top:580px" width="13" height="13" ><use href="#cb"/></svg><svg style="position:absolute;left:48px;top:578px" width="12" height="15" ><use href="#doc"/></svg><svg style="position:absolute;left:73px;top:577px" width="16" height="16" ><use href="#gear"/></svg><span class="t a" style="left:92px;top:582px;">Part</span><span class="t a lnk" style="left:125px;top:580px;letter-spacing:0.2px;">EV-000022</span><span class="t a" style="left:197px;top:580px;">A</span><div style="position:absolute;left:10px;top:597px;width:30px;height:19px;background:#D9D9E5;"></div><div style="position:absolute;left:41px;top:597px;width:26px;height:19px;background:#D9D9E5;"></div><div style="position:absolute;left:68px;top:597px;width:51px;height:19px;background:#D9D9E5;"></div><div style="position:absolute;left:120px;top:597px;width:71px;height:19px;background:#D9D9E5;"></div><div style="position:absolute;left:192px;top:597px;width:88px;height:19px;background:#D9D9E5;"></div><div style="position:absolute;left:281px;top:597px;width:46px;height:19px;background:#D9D9E5;"></div><svg style="position:absolute;left:19px;top:600px" width="13" height="13" ><use href="#cbc"/></svg><svg style="position:absolute;left:48px;top:598px" width="12" height="15" ><use href="#doc"/></svg><svg style="position:absolute;left:73px;top:597px" width="16" height="16" ><use href="#gear"/></svg><span class="t a" style="left:92px;top:602px;">Part</span><span class="t a lnk" style="left:125px;top:600px;letter-spacing:0.2px;">EV-000023</span><span class="t a" style="left:197px;top:600px;">A</span><div style="position:absolute;left:10px;top:617px;width:30px;height:19px;background:#D9D9E5;"></div><div style="position:absolute;left:41px;top:617px;width:26px;height:19px;background:#D9D9E5;"></div><div style="position:absolute;left:68px;top:617px;width:51px;height:19px;background:#D9D9E5;"></div><div style="position:absolute;left:120px;top:617px;width:71px;height:19px;background:#D9D9E5;"></div><div style="position:absolute;left:192px;top:617px;width:88px;height:19px;background:#D9D9E5;"></div><div style="position:absolute;left:281px;top:617px;width:46px;height:19px;background:#D9D9E5;"></div><svg style="position:absolute;left:19px;top:620px" width="13" height="13" ><use href="#cbc"/></svg><svg style="position:absolute;left:48px;top:618px" width="12" height="15" ><use href="#doc"/></svg><svg style="position:absolute;left:73px;top:617px" width="16" height="16" ><use href="#gear"/></svg><span class="t a" style="left:92px;top:622px;">Part</span><span class="t a lnk" style="left:125px;top:620px;letter-spacing:0.2px;">EV-000024</span><span class="t a" style="left:197px;top:620px;">A</span><div style="position:absolute;left:10px;top:637px;width:30px;height:19px;background:#D9D9E5;"></div><div style="position:absolute;left:41px;top:637px;width:26px;height:19px;background:#D9D9E5;"></div><div style="position:absolute;left:68px;top:637px;width:51px;height:19px;background:#D9D9E5;"></div><div style="position:absolute;left:120px;top:637px;width:71px;height:19px;background:#D9D9E5;"></div><div style="position:absolute;left:192px;top:637px;width:88px;height:19px;background:#D9D9E5;"></div><div style="position:absolute;left:281px;top:637px;width:46px;height:19px;background:#D9D9E5;"></div><svg style="position:absolute;left:19px;top:640px" width="13" height="13" ><use href="#cbc"/></svg><svg style="position:absolute;left:48px;top:638px" width="12" height="15" ><use href="#doc"/></svg><svg style="position:absolute;left:73px;top:637px" width="16" height="16" ><use href="#gear"/></svg><span class="t a" style="left:92px;top:642px;">Part</span><span class="t a lnk" style="left:125px;top:640px;letter-spacing:0.2px;">EV-000025</span><span class="t a" style="left:197px;top:640px;">A</span><div style="position:absolute;left:0px;top:656px;width:356px;height:21px;background:#fff;"></div><div style="position:absolute;left:80px;top:657px;width:2px;height:1px;background:#333;"></div><div style="position:absolute;left:328px;top:196px;width:17px;height:462px;background:linear-gradient(to right,#F0EEE6,#FBFAF6 40%,#FEFEFC);"></div><svg style="position:absolute;left:328px;top:195px" width="17" height="18" viewBox="0 0 17 18"><rect x="1.5" y="1.5" width="14" height="15" rx="2" fill="#FFFFFF" stroke="#FFFFFF" stroke-width="1"/><path d="M3.5 17.5 H14.5 M16.5 3.5 V15.5" stroke="#8AA8E4" stroke-width="1" fill="none" opacity="0.55"/><rect x="2" y="2" width="13" height="14" rx="1.5" fill="url(#gbtn)"/><rect x="2.5" y="2.5" width="12" height="13" rx="1.5" fill="none" stroke="#A4BCF2" stroke-width="1" opacity="0.7"/><path d="M4.5 10.8 L8.5 6.8 L12.5 10.8" fill="none" stroke="#4D6185" stroke-width="2.4" transform="rotate(0 8.5 9.0)"/></svg><svg style="position:absolute;left:328px;top:640px" width="17" height="18" viewBox="0 0 17 18"><rect x="1.5" y="1.5" width="14" height="15" rx="2" fill="#FFFFFF" stroke="#FFFFFF" stroke-width="1"/><path d="M3.5 17.5 H14.5 M16.5 3.5 V15.5" stroke="#8AA8E4" stroke-width="1" fill="none" opacity="0.55"/><rect x="2" y="2" width="13" height="14" rx="1.5" fill="url(#gbtn)"/><rect x="2.5" y="2.5" width="12" height="13" rx="1.5" fill="none" stroke="#A4BCF2" stroke-width="1" opacity="0.7"/><path d="M4.5 10.8 L8.5 6.8 L12.5 10.8" fill="none" stroke="#4D6185" stroke-width="2.4" transform="rotate(180 8.5 9.0)"/></svg><svg style="position:absolute;left:328px;top:213px" width="17" height="394"><rect x="1.5" y="0.5" width="14" height="393" rx="2" fill="#FFFFFF" stroke="#FFFFFF"/><path d="M16.5 2.5 V392" stroke="#8AA8E4" opacity="0.55"/><rect x="2" y="1" width="13" height="392" rx="1.5" fill="url(#gsb)"/><rect x="2.5" y="1.5" width="12" height="391" rx="1.5" fill="none" stroke="#A4BCF2" opacity="0.7"/><path d="M5.5 193.5 H10.5" stroke="#EEF4FE" stroke-width="1"/><path d="M6.5 194.5 H11.5" stroke="#8CB0F8" stroke-width="1"/><path d="M5.5 195.5 H10.5" stroke="#EEF4FE" stroke-width="1"/><path d="M6.5 196.5 H11.5" stroke="#8CB0F8" stroke-width="1"/><path d="M5.5 197.5 H10.5" stroke="#EEF4FE" stroke-width="1"/><path d="M6.5 198.5 H11.5" stroke="#8CB0F8" stroke-width="1"/><path d="M5.5 199.5 H10.5" stroke="#EEF4FE" stroke-width="1"/><path d="M6.5 200.5 H11.5" stroke="#8CB0F8" stroke-width="1"/></svg><div style="position:absolute;left:328px;top:658px;width:18px;height:19px;background:#ECE9D8;"></div><div style="position:absolute;left:280px;top:659px;width:48px;height:17px;background:linear-gradient(to bottom,#F0EEE6,#FBFAF6 40%,#FEFEFC);"></div><svg style="position:absolute;left:279px;top:659px" width="18" height="17" viewBox="0 0 18 17"><rect x="1.5" y="1.5" width="15" height="14" rx="2" fill="#FFFFFF" stroke="#FFFFFF" stroke-width="1"/><path d="M3.5 16.5 H15.5 M17.5 3.5 V14.5" stroke="#8AA8E4" stroke-width="1" fill="none" opacity="0.55"/><rect x="2" y="2" width="14" height="13" rx="1.5" fill="url(#gbtn)"/><rect x="2.5" y="2.5" width="13" height="12" rx="1.5" fill="none" stroke="#A4BCF2" stroke-width="1" opacity="0.7"/><path d="M5.0 10.3 L9.0 6.3 L13.0 10.3" fill="none" stroke="#4D6185" stroke-width="2.4" transform="rotate(270 9.0 8.5)"/></svg><svg style="position:absolute;left:309px;top:659px" width="18" height="17" viewBox="0 0 18 17"><rect x="1.5" y="1.5" width="15" height="14" rx="2" fill="#FFFFFF" stroke="#FFFFFF" stroke-width="1"/><path d="M3.5 16.5 H15.5 M17.5 3.5 V14.5" stroke="#8AA8E4" stroke-width="1" fill="none" opacity="0.55"/><rect x="2" y="2" width="14" height="13" rx="1.5" fill="url(#gbtn)"/><rect x="2.5" y="2.5" width="13" height="12" rx="1.5" fill="none" stroke="#A4BCF2" stroke-width="1" opacity="0.7"/><path d="M5.0 10.3 L9.0 6.3 L13.0 10.3" fill="none" stroke="#4D6185" stroke-width="2.4" transform="rotate(90 9.0 8.5)"/></svg><div style="position:absolute;left:368px;top:87px;width:546px;height:27px;background:#E4E4E4;border:1px solid #A0A0A0;border-bottom-color:#808080;border-right-color:#808080;box-sizing:border-box;box-shadow:inset 1px 1px 0 #FAFAFA;"></div><div style="position:absolute;left:368px;top:113px;width:546px;height:26px;background:#E4E4E4;border:1px solid #A0A0A0;border-bottom-color:#808080;border-right-color:#808080;box-sizing:border-box;box-shadow:inset 1px 1px 0 #FAFAFA;"></div><span class="t v" style="left:385.5px;top:94px;letter-spacing:-0.1px;">Actions</span><svg style="position:absolute;left:440px;top:98px" width="9" height="5"><path d="M0.5 0.5 H8.5 L4.5 4.5 Z" fill="#111"/></svg><svg style="position:absolute;left:463px;top:93px" width="16" height="16" ><use href="#bs"/></svg><span class="t v dis" style="left:485.5px;top:94px;letter-spacing:0.15px;">Build Structure</span><svg style="position:absolute;left:583px;top:93px" width="16" height="16" ><use href="#bs"/></svg><span class="t v" style="left:605px;top:94px;letter-spacing:0.22px;">Build Structure (NEW)</span><svg style="position:absolute;left:744px;top:93px" width="14" height="14" ><use href="#redx"/></svg><span class="t v dis" style="left:765px;top:94px;letter-spacing:0.12px;">Disconnect</span><span class="t v" style="left:376.5px;top:120px;letter-spacing:0.05px;">View</span><div style="position:absolute;left:409px;top:116px;width:102px;height:19px;background:#fff;border:1px solid #7F9DB9;box-sizing:border-box;"></div><span class="t v" style="left:415px;top:120px;letter-spacing:0.2px;">Part View</span><svg style="position:absolute;left:493px;top:119px" width="15" height="13" viewBox="0 0 15 13"><rect x="0" y="0" width="15" height="13" rx="1.5" fill="url(#gbtn)"/><path d="M3.5 4.3 L7.5 8.3 L11.5 4.3" fill="none" stroke="#4D6185" stroke-width="2.5"/></svg><span class="t v" style="left:518px;top:120px;letter-spacing:0.3px;">Table</span><div style="position:absolute;left:554px;top:116px;width:160px;height:19px;background:#fff;border:1px solid #7F9DB9;box-sizing:border-box;"></div><span class="t v" style="left:560px;top:120px;letter-spacing:0.4px;">TVC EBOM</span><svg style="position:absolute;left:696px;top:119px" width="15" height="13" viewBox="0 0 15 13"><rect x="0" y="0" width="15" height="13" rx="1.5" fill="url(#gbtn)"/><path d="M3.5 4.3 L7.5 8.3 L11.5 4.3" fill="none" stroke="#4D6185" stroke-width="2.5"/></svg><span class="t v" style="left:721px;top:120px;letter-spacing:0.3px;">Filter</span><div style="position:absolute;left:754px;top:116px;width:137px;height:19px;background:#ECEBE4;border:1px solid #7F9DB9;box-sizing:border-box;"></div><span class="t v" style="left:757px;top:119px;letter-spacing:0.3px;">EBOM From</span><svg style="position:absolute;left:896px;top:115px" width="17" height="22" viewBox="0 0 17 22"><path d="M2.6 6 V17 H4.2 M2.6 10 H4.2" stroke="#15153C" stroke-width="1.3" fill="none"/><circle cx="2.6" cy="5.6" r="1.7" fill="#22A4F4"/><rect x="5.5" y="1.5" width="9" height="8" fill="#FAFAF4" stroke="#C8B098"/><rect x="5.5" y="12.5" width="9" height="8" fill="#FAFAF4" stroke="#C8B098"/><path d="M11.6 3.6 L8.8 5.5 L11.6 7.4" fill="none" stroke="#4A3420" stroke-width="1.2"/><path d="M8.6 14.6 L11.4 16.5 L8.6 18.4" fill="none" stroke="#4A3420" stroke-width="1.2"/></svg><div style="position:absolute;left:369px;top:145px;width:30px;height:33px;background:#336699;"></div><div style="position:absolute;left:400px;top:145px;width:48px;height:33px;background:#336699;"></div><div style="position:absolute;left:449px;top:145px;width:26px;height:33px;background:#336699;"></div><div style="position:absolute;left:476px;top:145px;width:51px;height:33px;background:#336699;"></div><div style="position:absolute;left:528px;top:145px;width:71px;height:33px;background:#336699;"></div><div style="position:absolute;left:600px;top:145px;width:32px;height:33px;background:#336699;"></div><div style="position:absolute;left:633px;top:145px;width:82px;height:33px;background:#336699;"></div><div style="position:absolute;left:716px;top:145px;width:47px;height:33px;background:#336699;"></div><div style="position:absolute;left:764px;top:145px;width:58px;height:33px;background:#336699;"></div><div style="position:absolute;left:823px;top:145px;width:51px;height:33px;background:#336699;"></div><div style="position:absolute;left:875px;top:145px;width:20px;height:33px;background:#336699;"></div><svg style="position:absolute;left:373px;top:155px" width="13" height="13" ><use href="#cb"/></svg><span class="t vb" style="left:480px;top:156px;letter-spacing:0.6px;">Type</span><span class="t vb" style="left:532px;top:156px;letter-spacing:0.6px;">Part</span><span class="t vb" style="left:604px;top:156px;letter-spacing:0.5px;">Rev</span><span class="t vb" style="left:637px;top:156px;letter-spacing:0.2px;">Description</span><span class="t vb" style="left:720px;top:156px;letter-spacing:0.5px;">State</span><span class="t vb" style="left:768px;top:156px;letter-spacing:1.4px;">F/N</span><span class="t vb" style="left:827px;top:156px;letter-spacing:0.15px;">Qty</span><span class="t vb" style="left:879px;top:150px;">Un</span><span class="t vb" style="left:879px;top:164px;">Me</span><svg style="position:absolute;left:808px;top:158px" width="6" height="7" viewBox="0 0 6 7"><path d="M3 0.3 L5.8 6.8 H0.2 Z" fill="#D4D4D0"/><path d="M3 0.3 L5.8 6.8 H3.6 Z" fill="#A8A8A8"/></svg><svg style="position:absolute;left:855px;top:154px" width="14" height="15" viewBox="0 0 13 14"><rect x="0.5" y="6.5" width="10" height="7" fill="#FFF8D8" stroke="#5A4A1A"/><path d="M2 11 L4 7.5 L10.5 1 L12.3 2.8 L6 9.5 Z" fill="#F0C030" stroke="#3A2A0A" stroke-width="0.8"/><path d="M10.5 1 L12.3 2.8" stroke="#D03030" stroke-width="1.6"/><path d="M2 11 L3 9.2 L3.8 10.2 Z" fill="#222"/></svg><div style="position:absolute;left:369px;top:179px;width:30px;height:26px;background:#EEEEEE;"></div><div style="position:absolute;left:400px;top:179px;width:48px;height:26px;background:#EEEEEE;"></div><div style="position:absolute;left:449px;top:179px;width:26px;height:26px;background:#EEEEEE;"></div><div style="position:absolute;left:476px;top:179px;width:51px;height:26px;background:#EEEEEE;"></div><div style="position:absolute;left:528px;top:179px;width:71px;height:26px;background:#EEEEEE;"></div><div style="position:absolute;left:600px;top:179px;width:32px;height:26px;background:#EEEEEE;"></div><div style="position:absolute;left:633px;top:179px;width:82px;height:26px;background:#EEEEEE;"></div><div style="position:absolute;left:716px;top:179px;width:47px;height:26px;background:#EEEEEE;"></div><div style="position:absolute;left:764px;top:179px;width:58px;height:26px;background:#EEEEEE;"></div><div style="position:absolute;left:823px;top:179px;width:51px;height:26px;background:#EEEEEE;"></div><div style="position:absolute;left:875px;top:179px;width:20px;height:26px;background:#EEEEEE;"></div><svg style="position:absolute;left:378px;top:185px" width="13" height="13" ><use href="#cb"/></svg><div style="position:absolute;left:416px;top:197px;width:1px;height:9px;background:#B4B4AC;"></div><svg style="position:absolute;left:410px;top:186px" width="11" height="11" ><use href="#minus"/></svg><svg style="position:absolute;left:456px;top:184px" width="12" height="15" ><use href="#doc"/></svg><svg style="position:absolute;left:481px;top:182px" width="16" height="16" ><use href="#gear"/></svg><span class="t a" style="left:500px;top:187px;">Part</span><span class="t a lnk" style="left:533px;top:185px;letter-spacing:0.2px;">EV-000001</span><span class="t a" style="left:605px;top:185px;">A</span><span class="t a" style="left:721.5px;top:185px;letter-spacing:0.15px;">Create</span><span class="t a" style="left:880px;top:185px;">FT</span><div style="position:absolute;left:369px;top:206px;width:30px;height:26px;background:#D9D9E5;"></div><div style="position:absolute;left:400px;top:206px;width:48px;height:26px;background:#D9D9E5;"></div><div style="position:absolute;left:449px;top:206px;width:26px;height:26px;background:#D9D9E5;"></div><div style="position:absolute;left:476px;top:206px;width:51px;height:26px;background:#D9D9E5;"></div><div style="position:absolute;left:528px;top:206px;width:71px;height:26px;background:#D9D9E5;"></div><div style="position:absolute;left:600px;top:206px;width:32px;height:26px;background:#D9D9E5;"></div><div style="position:absolute;left:633px;top:206px;width:82px;height:26px;background:#D9D9E5;"></div><div style="position:absolute;left:716px;top:206px;width:47px;height:26px;background:#D9D9E5;"></div><div style="position:absolute;left:764px;top:206px;width:58px;height:26px;background:#D9D9E5;"></div><div style="position:absolute;left:823px;top:206px;width:51px;height:26px;background:#D9D9E5;"></div><div style="position:absolute;left:875px;top:206px;width:20px;height:26px;background:#D9D9E5;"></div><svg style="position:absolute;left:378px;top:212px" width="13" height="13" ><use href="#cb"/></svg><div style="position:absolute;left:416px;top:205px;width:1px;height:28px;background:#B4B4AC;"></div><div style="position:absolute;left:417px;top:218px;width:6px;height:1px;background:#B4B4AC;"></div><svg style="position:absolute;left:423px;top:214px" width="14" height="9" ><use href="#plus"/></svg><svg style="position:absolute;left:456px;top:211px" width="12" height="15" ><use href="#doc"/></svg><svg style="position:absolute;left:481px;top:209px" width="16" height="16" ><use href="#gear"/></svg><span class="t a" style="left:500px;top:214px;">Part</span><span class="t a lnk" style="left:533px;top:212px;letter-spacing:0.2px;">EV-000025</span><span class="t a" style="left:605px;top:212px;">A</span><span class="t a" style="left:721.5px;top:212px;letter-spacing:0.15px;">Create</span><span class="t a" style="left:769.5px;top:212px;">0</span><span class="t a" style="left:828.5px;top:212px;">1,0</span><span class="t a" style="left:880px;top:212px;">EA</span><div style="position:absolute;left:369px;top:233px;width:30px;height:26px;background:#D9D9E5;"></div><div style="position:absolute;left:400px;top:233px;width:48px;height:26px;background:#D9D9E5;"></div><div style="position:absolute;left:449px;top:233px;width:26px;height:26px;background:#D9D9E5;"></div><div style="position:absolute;left:476px;top:233px;width:51px;height:26px;background:#D9D9E5;"></div><div style="position:absolute;left:528px;top:233px;width:71px;height:26px;background:#D9D9E5;"></div><div style="position:absolute;left:600px;top:233px;width:32px;height:26px;background:#D9D9E5;"></div><div style="position:absolute;left:633px;top:233px;width:82px;height:26px;background:#D9D9E5;"></div><div style="position:absolute;left:716px;top:233px;width:47px;height:26px;background:#D9D9E5;"></div><div style="position:absolute;left:764px;top:233px;width:58px;height:26px;background:#D9D9E5;"></div><div style="position:absolute;left:823px;top:233px;width:51px;height:26px;background:#D9D9E5;"></div><div style="position:absolute;left:875px;top:233px;width:20px;height:26px;background:#D9D9E5;"></div><svg style="position:absolute;left:378px;top:239px" width="13" height="13" ><use href="#cb"/></svg><div style="position:absolute;left:416px;top:232px;width:1px;height:28px;background:#B4B4AC;"></div><div style="position:absolute;left:417px;top:245px;width:6px;height:1px;background:#B4B4AC;"></div><svg style="position:absolute;left:423px;top:241px" width="14" height="9" ><use href="#plus"/></svg><svg style="position:absolute;left:456px;top:238px" width="12" height="15" ><use href="#doc"/></svg><svg style="position:absolute;left:481px;top:236px" width="16" height="16" ><use href="#gear"/></svg><span class="t a" style="left:500px;top:241px;">Part</span><span class="t a lnk" style="left:533px;top:239px;letter-spacing:0.2px;">EV-000024</span><span class="t a" style="left:605px;top:239px;">A</span><span class="t a" style="left:721.5px;top:239px;letter-spacing:0.15px;">Create</span><span class="t a" style="left:769.5px;top:239px;">0</span><span class="t a" style="left:828.5px;top:239px;">1,0</span><span class="t a" style="left:880px;top:239px;">EA</span><div style="position:absolute;left:369px;top:260px;width:30px;height:26px;background:#D9D9E5;"></div><div style="position:absolute;left:400px;top:260px;width:48px;height:26px;background:#D9D9E5;"></div><div style="position:absolute;left:449px;top:260px;width:26px;height:26px;background:#D9D9E5;"></div><div style="position:absolute;left:476px;top:260px;width:51px;height:26px;background:#D9D9E5;"></div><div style="position:absolute;left:528px;top:260px;width:71px;height:26px;background:#D9D9E5;"></div><div style="position:absolute;left:600px;top:260px;width:32px;height:26px;background:#D9D9E5;"></div><div style="position:absolute;left:633px;top:260px;width:82px;height:26px;background:#D9D9E5;"></div><div style="position:absolute;left:716px;top:260px;width:47px;height:26px;background:#D9D9E5;"></div><div style="position:absolute;left:764px;top:260px;width:58px;height:26px;background:#D9D9E5;"></div><div style="position:absolute;left:823px;top:260px;width:51px;height:26px;background:#D9D9E5;"></div><div style="position:absolute;left:875px;top:260px;width:20px;height:26px;background:#D9D9E5;"></div><svg style="position:absolute;left:378px;top:266px" width="13" height="13" ><use href="#cb"/></svg><div style="position:absolute;left:416px;top:259px;width:1px;height:28px;background:#B4B4AC;"></div><div style="position:absolute;left:417px;top:272px;width:6px;height:1px;background:#B4B4AC;"></div><svg style="position:absolute;left:423px;top:268px" width="14" height="9" ><use href="#plus"/></svg><svg style="position:absolute;left:456px;top:265px" width="12" height="15" ><use href="#doc"/></svg><svg style="position:absolute;left:481px;top:263px" width="16" height="16" ><use href="#gear"/></svg><span class="t a" style="left:500px;top:268px;">Part</span><span class="t a lnk" style="left:533px;top:266px;letter-spacing:0.2px;">EV-000023</span><span class="t a" style="left:605px;top:266px;">A</span><span class="t a" style="left:721.5px;top:266px;letter-spacing:0.15px;">Create</span><span class="t a" style="left:769.5px;top:266px;">0</span><span class="t a" style="left:828.5px;top:266px;">1,0</span><span class="t a" style="left:880px;top:266px;">EA</span><div style="position:absolute;left:369px;top:287px;width:30px;height:26px;background:#EEEEEE;"></div><div style="position:absolute;left:400px;top:287px;width:48px;height:26px;background:#EEEEEE;"></div><div style="position:absolute;left:449px;top:287px;width:26px;height:26px;background:#EEEEEE;"></div><div style="position:absolute;left:476px;top:287px;width:51px;height:26px;background:#EEEEEE;"></div><div style="position:absolute;left:528px;top:287px;width:71px;height:26px;background:#EEEEEE;"></div><div style="position:absolute;left:600px;top:287px;width:32px;height:26px;background:#EEEEEE;"></div><div style="position:absolute;left:633px;top:287px;width:82px;height:26px;background:#EEEEEE;"></div><div style="position:absolute;left:716px;top:287px;width:47px;height:26px;background:#EEEEEE;"></div><div style="position:absolute;left:764px;top:287px;width:58px;height:26px;background:#EEEEEE;"></div><div style="position:absolute;left:823px;top:287px;width:51px;height:26px;background:#EEEEEE;"></div><div style="position:absolute;left:875px;top:287px;width:20px;height:26px;background:#EEEEEE;"></div><svg style="position:absolute;left:378px;top:293px" width="13" height="13" ><use href="#cb"/></svg><div style="position:absolute;left:416px;top:286px;width:1px;height:28px;background:#B4B4AC;"></div><div style="position:absolute;left:417px;top:299px;width:6px;height:1px;background:#B4B4AC;"></div><svg style="position:absolute;left:423px;top:295px" width="14" height="9" ><use href="#plus"/></svg><svg style="position:absolute;left:456px;top:292px" width="12" height="15" ><use href="#doc"/></svg><svg style="position:absolute;left:481px;top:290px" width="16" height="16" ><use href="#gear"/></svg><span class="t a" style="left:500px;top:295px;">Part</span><span class="t a lnk" style="left:533px;top:293px;letter-spacing:0.2px;">EV-000158</span><span class="t a" style="left:605px;top:293px;">A</span><span class="t a" style="left:721.5px;top:293px;letter-spacing:0.15px;">Create</span><span class="t a" style="left:769.5px;top:293px;">0</span><span class="t a" style="left:828.5px;top:293px;">0,0</span><span class="t a" style="left:880px;top:293px;">EA</span><div style="position:absolute;left:369px;top:314px;width:30px;height:26px;background:#FFFFFF;"></div><div style="position:absolute;left:400px;top:314px;width:48px;height:26px;background:#FFFFFF;"></div><div style="position:absolute;left:449px;top:314px;width:26px;height:26px;background:#FFFFFF;"></div><div style="position:absolute;left:476px;top:314px;width:51px;height:26px;background:#FFFFFF;"></div><div style="position:absolute;left:528px;top:314px;width:71px;height:26px;background:#FFFFFF;"></div><div style="position:absolute;left:600px;top:314px;width:32px;height:26px;background:#FFFFFF;"></div><div style="position:absolute;left:633px;top:314px;width:82px;height:26px;background:#FFFFFF;"></div><div style="position:absolute;left:716px;top:314px;width:47px;height:26px;background:#FFFFFF;"></div><div style="position:absolute;left:764px;top:314px;width:58px;height:26px;background:#FFFFFF;"></div><div style="position:absolute;left:823px;top:314px;width:51px;height:26px;background:#FFFFFF;"></div><div style="position:absolute;left:875px;top:314px;width:20px;height:26px;background:#FFFFFF;"></div><svg style="position:absolute;left:378px;top:320px" width="13" height="13" ><use href="#cb"/></svg><div style="position:absolute;left:416px;top:313px;width:1px;height:28px;background:#B4B4AC;"></div><div style="position:absolute;left:417px;top:326px;width:6px;height:1px;background:#B4B4AC;"></div><svg style="position:absolute;left:423px;top:322px" width="14" height="9" ><use href="#plus"/></svg><svg style="position:absolute;left:456px;top:319px" width="12" height="15" ><use href="#doc"/></svg><svg style="position:absolute;left:481px;top:317px" width="16" height="16" ><use href="#gear"/></svg><span class="t a" style="left:500px;top:322px;">Part</span><span class="t a lnk" style="left:533px;top:320px;letter-spacing:0.2px;">EV-000470</span><span class="t a" style="left:605px;top:320px;">A</span><span class="t a" style="left:721.5px;top:320px;letter-spacing:0.15px;">Create</span><span class="t a" style="left:769.5px;top:320px;">0</span><span class="t a" style="left:828.5px;top:320px;">0,0</span><span class="t a" style="left:880px;top:320px;">FT</span><div style="position:absolute;left:369px;top:341px;width:30px;height:26px;background:#EEEEEE;"></div><div style="position:absolute;left:400px;top:341px;width:48px;height:26px;background:#EEEEEE;"></div><div style="position:absolute;left:449px;top:341px;width:26px;height:26px;background:#EEEEEE;"></div><div style="position:absolute;left:476px;top:341px;width:51px;height:26px;background:#EEEEEE;"></div><div style="position:absolute;left:528px;top:341px;width:71px;height:26px;background:#EEEEEE;"></div><div style="position:absolute;left:600px;top:341px;width:32px;height:26px;background:#EEEEEE;"></div><div style="position:absolute;left:633px;top:341px;width:82px;height:26px;background:#EEEEEE;"></div><div style="position:absolute;left:716px;top:341px;width:47px;height:26px;background:#EEEEEE;"></div><div style="position:absolute;left:764px;top:341px;width:58px;height:26px;background:#EEEEEE;"></div><div style="position:absolute;left:823px;top:341px;width:51px;height:26px;background:#EEEEEE;"></div><div style="position:absolute;left:875px;top:341px;width:20px;height:26px;background:#EEEEEE;"></div><svg style="position:absolute;left:378px;top:347px" width="13" height="13" ><use href="#cb"/></svg><div style="position:absolute;left:416px;top:340px;width:1px;height:28px;background:#B4B4AC;"></div><div style="position:absolute;left:417px;top:353px;width:6px;height:1px;background:#B4B4AC;"></div><svg style="position:absolute;left:423px;top:349px" width="14" height="9" ><use href="#plus"/></svg><svg style="position:absolute;left:456px;top:346px" width="12" height="15" ><use href="#doc"/></svg><svg style="position:absolute;left:481px;top:344px" width="16" height="16" ><use href="#gear"/></svg><span class="t a" style="left:500px;top:349px;">Part</span><span class="t a lnk" style="left:533px;top:347px;letter-spacing:0.2px;">EV-000626</span><span class="t a" style="left:605px;top:347px;">A</span><span class="t a" style="left:721.5px;top:347px;letter-spacing:0.15px;">Create</span><span class="t a" style="left:769.5px;top:347px;">0</span><span class="t a" style="left:828.5px;top:347px;">0,0</span><span class="t a" style="left:880px;top:347px;">FT</span><div style="position:absolute;left:369px;top:368px;width:30px;height:26px;background:#FFFFFF;"></div><div style="position:absolute;left:400px;top:368px;width:48px;height:26px;background:#FFFFFF;"></div><div style="position:absolute;left:449px;top:368px;width:26px;height:26px;background:#FFFFFF;"></div><div style="position:absolute;left:476px;top:368px;width:51px;height:26px;background:#FFFFFF;"></div><div style="position:absolute;left:528px;top:368px;width:71px;height:26px;background:#FFFFFF;"></div><div style="position:absolute;left:600px;top:368px;width:32px;height:26px;background:#FFFFFF;"></div><div style="position:absolute;left:633px;top:368px;width:82px;height:26px;background:#FFFFFF;"></div><div style="position:absolute;left:716px;top:368px;width:47px;height:26px;background:#FFFFFF;"></div><div style="position:absolute;left:764px;top:368px;width:58px;height:26px;background:#FFFFFF;"></div><div style="position:absolute;left:823px;top:368px;width:51px;height:26px;background:#FFFFFF;"></div><div style="position:absolute;left:875px;top:368px;width:20px;height:26px;background:#FFFFFF;"></div><svg style="position:absolute;left:378px;top:374px" width="13" height="13" ><use href="#cb"/></svg><div style="position:absolute;left:416px;top:367px;width:1px;height:28px;background:#B4B4AC;"></div><div style="position:absolute;left:417px;top:380px;width:6px;height:1px;background:#B4B4AC;"></div><svg style="position:absolute;left:423px;top:376px" width="14" height="9" ><use href="#plus"/></svg><svg style="position:absolute;left:456px;top:373px" width="12" height="15" ><use href="#doc"/></svg><svg style="position:absolute;left:481px;top:371px" width="16" height="16" ><use href="#gear"/></svg><span class="t a" style="left:500px;top:376px;">Part</span><span class="t a lnk" style="left:533px;top:374px;letter-spacing:0.2px;">EV-000782</span><span class="t a" style="left:605px;top:374px;">A</span><span class="t a" style="left:721.5px;top:374px;letter-spacing:0.15px;">Create</span><span class="t a" style="left:769.5px;top:374px;">0</span><span class="t a" style="left:828.5px;top:374px;">0,0</span><span class="t a" style="left:880px;top:374px;">FT</span><div style="position:absolute;left:369px;top:395px;width:30px;height:26px;background:#EEEEEE;"></div><div style="position:absolute;left:400px;top:395px;width:48px;height:26px;background:#EEEEEE;"></div><div style="position:absolute;left:449px;top:395px;width:26px;height:26px;background:#EEEEEE;"></div><div style="position:absolute;left:476px;top:395px;width:51px;height:26px;background:#EEEEEE;"></div><div style="position:absolute;left:528px;top:395px;width:71px;height:26px;background:#EEEEEE;"></div><div style="position:absolute;left:600px;top:395px;width:32px;height:26px;background:#EEEEEE;"></div><div style="position:absolute;left:633px;top:395px;width:82px;height:26px;background:#EEEEEE;"></div><div style="position:absolute;left:716px;top:395px;width:47px;height:26px;background:#EEEEEE;"></div><div style="position:absolute;left:764px;top:395px;width:58px;height:26px;background:#EEEEEE;"></div><div style="position:absolute;left:823px;top:395px;width:51px;height:26px;background:#EEEEEE;"></div><div style="position:absolute;left:875px;top:395px;width:20px;height:26px;background:#EEEEEE;"></div><svg style="position:absolute;left:378px;top:401px" width="13" height="13" ><use href="#cb"/></svg><div style="position:absolute;left:416px;top:394px;width:1px;height:28px;background:#B4B4AC;"></div><div style="position:absolute;left:417px;top:407px;width:6px;height:1px;background:#B4B4AC;"></div><svg style="position:absolute;left:423px;top:403px" width="14" height="9" ><use href="#plus"/></svg><svg style="position:absolute;left:456px;top:400px" width="12" height="15" ><use href="#doc"/></svg><svg style="position:absolute;left:481px;top:398px" width="16" height="16" ><use href="#gear"/></svg><span class="t a" style="left:500px;top:403px;">Part</span><span class="t a lnk" style="left:533px;top:401px;letter-spacing:0.2px;">EV-000938</span><span class="t a" style="left:605px;top:401px;">A</span><span class="t a" style="left:721.5px;top:401px;letter-spacing:0.15px;">Create</span><span class="t a" style="left:769.5px;top:401px;">0</span><span class="t a" style="left:828.5px;top:401px;">0,0</span><span class="t a" style="left:880px;top:401px;">FT</span><div style="position:absolute;left:369px;top:422px;width:30px;height:26px;background:#FFFFFF;"></div><div style="position:absolute;left:400px;top:422px;width:48px;height:26px;background:#FFFFFF;"></div><div style="position:absolute;left:449px;top:422px;width:26px;height:26px;background:#FFFFFF;"></div><div style="position:absolute;left:476px;top:422px;width:51px;height:26px;background:#FFFFFF;"></div><div style="position:absolute;left:528px;top:422px;width:71px;height:26px;background:#FFFFFF;"></div><div style="position:absolute;left:600px;top:422px;width:32px;height:26px;background:#FFFFFF;"></div><div style="position:absolute;left:633px;top:422px;width:82px;height:26px;background:#FFFFFF;"></div><div style="position:absolute;left:716px;top:422px;width:47px;height:26px;background:#FFFFFF;"></div><div style="position:absolute;left:764px;top:422px;width:58px;height:26px;background:#FFFFFF;"></div><div style="position:absolute;left:823px;top:422px;width:51px;height:26px;background:#FFFFFF;"></div><div style="position:absolute;left:875px;top:422px;width:20px;height:26px;background:#FFFFFF;"></div><svg style="position:absolute;left:378px;top:428px" width="13" height="13" ><use href="#cb"/></svg><div style="position:absolute;left:416px;top:421px;width:1px;height:28px;background:#B4B4AC;"></div><div style="position:absolute;left:417px;top:434px;width:6px;height:1px;background:#B4B4AC;"></div><svg style="position:absolute;left:423px;top:430px" width="14" height="9" ><use href="#plus"/></svg><svg style="position:absolute;left:456px;top:427px" width="12" height="15" ><use href="#doc"/></svg><svg style="position:absolute;left:481px;top:425px" width="16" height="16" ><use href="#gear"/></svg><span class="t a" style="left:500px;top:430px;">Part</span><span class="t a lnk" style="left:533px;top:428px;letter-spacing:0.2px;">EV-001094</span><span class="t a" style="left:605px;top:428px;">A</span><span class="t a" style="left:721.5px;top:428px;letter-spacing:0.15px;">Create</span><span class="t a" style="left:769.5px;top:428px;">0</span><span class="t a" style="left:828.5px;top:428px;">0,0</span><span class="t a" style="left:880px;top:428px;">FT</span><div style="position:absolute;left:369px;top:449px;width:30px;height:26px;background:#EEEEEE;"></div><div style="position:absolute;left:400px;top:449px;width:48px;height:26px;background:#EEEEEE;"></div><div style="position:absolute;left:449px;top:449px;width:26px;height:26px;background:#EEEEEE;"></div><div style="position:absolute;left:476px;top:449px;width:51px;height:26px;background:#EEEEEE;"></div><div style="position:absolute;left:528px;top:449px;width:71px;height:26px;background:#EEEEEE;"></div><div style="position:absolute;left:600px;top:449px;width:32px;height:26px;background:#EEEEEE;"></div><div style="position:absolute;left:633px;top:449px;width:82px;height:26px;background:#EEEEEE;"></div><div style="position:absolute;left:716px;top:449px;width:47px;height:26px;background:#EEEEEE;"></div><div style="position:absolute;left:764px;top:449px;width:58px;height:26px;background:#EEEEEE;"></div><div style="position:absolute;left:823px;top:449px;width:51px;height:26px;background:#EEEEEE;"></div><div style="position:absolute;left:875px;top:449px;width:20px;height:26px;background:#EEEEEE;"></div><svg style="position:absolute;left:378px;top:455px" width="13" height="13" ><use href="#cb"/></svg><div style="position:absolute;left:416px;top:448px;width:1px;height:28px;background:#B4B4AC;"></div><div style="position:absolute;left:417px;top:461px;width:6px;height:1px;background:#B4B4AC;"></div><svg style="position:absolute;left:423px;top:457px" width="14" height="9" ><use href="#plus"/></svg><svg style="position:absolute;left:456px;top:454px" width="12" height="15" ><use href="#doc"/></svg><svg style="position:absolute;left:481px;top:452px" width="16" height="16" ><use href="#gear"/></svg><span class="t a" style="left:500px;top:457px;">Part</span><span class="t a lnk" style="left:533px;top:455px;letter-spacing:0.2px;">EV-000003</span><span class="t a" style="left:605px;top:455px;">A</span><span class="t a" style="left:721.5px;top:455px;letter-spacing:0.15px;">Create</span><span class="t a" style="left:769.5px;top:455px;">0</span><span class="t a" style="left:828.5px;top:455px;">0,0</span><span class="t a" style="left:880px;top:455px;">EA</span><div style="position:absolute;left:369px;top:476px;width:30px;height:26px;background:#FFFFFF;"></div><div style="position:absolute;left:400px;top:476px;width:48px;height:26px;background:#FFFFFF;"></div><div style="position:absolute;left:449px;top:476px;width:26px;height:26px;background:#FFFFFF;"></div><div style="position:absolute;left:476px;top:476px;width:51px;height:26px;background:#FFFFFF;"></div><div style="position:absolute;left:528px;top:476px;width:71px;height:26px;background:#FFFFFF;"></div><div style="position:absolute;left:600px;top:476px;width:32px;height:26px;background:#FFFFFF;"></div><div style="position:absolute;left:633px;top:476px;width:82px;height:26px;background:#FFFFFF;"></div><div style="position:absolute;left:716px;top:476px;width:47px;height:26px;background:#FFFFFF;"></div><div style="position:absolute;left:764px;top:476px;width:58px;height:26px;background:#FFFFFF;"></div><div style="position:absolute;left:823px;top:476px;width:51px;height:26px;background:#FFFFFF;"></div><div style="position:absolute;left:875px;top:476px;width:20px;height:26px;background:#FFFFFF;"></div><svg style="position:absolute;left:378px;top:482px" width="13" height="13" ><use href="#cb"/></svg><div style="position:absolute;left:416px;top:475px;width:1px;height:28px;background:#B4B4AC;"></div><div style="position:absolute;left:417px;top:488px;width:6px;height:1px;background:#B4B4AC;"></div><svg style="position:absolute;left:423px;top:484px" width="14" height="9" ><use href="#plus"/></svg><svg style="position:absolute;left:456px;top:481px" width="12" height="15" ><use href="#doc"/></svg><svg style="position:absolute;left:481px;top:479px" width="16" height="16" ><use href="#gear"/></svg><span class="t a" style="left:500px;top:484px;">Part</span><span class="t a lnk" style="left:533px;top:482px;letter-spacing:0.2px;">EV-000003</span><span class="t a" style="left:605px;top:482px;">A</span><span class="t a" style="left:721.5px;top:482px;letter-spacing:0.15px;">Create</span><span class="t a" style="left:769.5px;top:482px;">0</span><span class="t a" style="left:828.5px;top:482px;">1,0</span><span class="t a" style="left:880px;top:482px;">EA</span><div style="position:absolute;left:369px;top:503px;width:30px;height:26px;background:#EEEEEE;"></div><div style="position:absolute;left:400px;top:503px;width:48px;height:26px;background:#EEEEEE;"></div><div style="position:absolute;left:449px;top:503px;width:26px;height:26px;background:#EEEEEE;"></div><div style="position:absolute;left:476px;top:503px;width:51px;height:26px;background:#EEEEEE;"></div><div style="position:absolute;left:528px;top:503px;width:71px;height:26px;background:#EEEEEE;"></div><div style="position:absolute;left:600px;top:503px;width:32px;height:26px;background:#EEEEEE;"></div><div style="position:absolute;left:633px;top:503px;width:82px;height:26px;background:#EEEEEE;"></div><div style="position:absolute;left:716px;top:503px;width:47px;height:26px;background:#EEEEEE;"></div><div style="position:absolute;left:764px;top:503px;width:58px;height:26px;background:#EEEEEE;"></div><div style="position:absolute;left:823px;top:503px;width:51px;height:26px;background:#EEEEEE;"></div><div style="position:absolute;left:875px;top:503px;width:20px;height:26px;background:#EEEEEE;"></div><svg style="position:absolute;left:378px;top:509px" width="13" height="13" ><use href="#cb"/></svg><div style="position:absolute;left:416px;top:502px;width:1px;height:28px;background:#B4B4AC;"></div><div style="position:absolute;left:417px;top:515px;width:6px;height:1px;background:#B4B4AC;"></div><svg style="position:absolute;left:423px;top:511px" width="14" height="9" ><use href="#plus"/></svg><svg style="position:absolute;left:456px;top:508px" width="12" height="15" ><use href="#doc"/></svg><svg style="position:absolute;left:481px;top:506px" width="16" height="16" ><use href="#gear"/></svg><span class="t a" style="left:500px;top:511px;">Part</span><span class="t a lnk" style="left:533px;top:509px;letter-spacing:0.2px;">EV-000158</span><span class="t a" style="left:605px;top:509px;">A</span><span class="t a" style="left:721.5px;top:509px;letter-spacing:0.15px;">Create</span><span class="t a" style="left:769.5px;top:509px;">0</span><span class="t a" style="left:828.5px;top:509px;">0,0</span><span class="t a" style="left:880px;top:509px;">EA</span><div style="position:absolute;left:369px;top:530px;width:30px;height:26px;background:#FFFFFF;"></div><div style="position:absolute;left:400px;top:530px;width:48px;height:26px;background:#FFFFFF;"></div><div style="position:absolute;left:449px;top:530px;width:26px;height:26px;background:#FFFFFF;"></div><div style="position:absolute;left:476px;top:530px;width:51px;height:26px;background:#FFFFFF;"></div><div style="position:absolute;left:528px;top:530px;width:71px;height:26px;background:#FFFFFF;"></div><div style="position:absolute;left:600px;top:530px;width:32px;height:26px;background:#FFFFFF;"></div><div style="position:absolute;left:633px;top:530px;width:82px;height:26px;background:#FFFFFF;"></div><div style="position:absolute;left:716px;top:530px;width:47px;height:26px;background:#FFFFFF;"></div><div style="position:absolute;left:764px;top:530px;width:58px;height:26px;background:#FFFFFF;"></div><div style="position:absolute;left:823px;top:530px;width:51px;height:26px;background:#FFFFFF;"></div><div style="position:absolute;left:875px;top:530px;width:20px;height:26px;background:#FFFFFF;"></div><svg style="position:absolute;left:378px;top:536px" width="13" height="13" ><use href="#cb"/></svg><div style="position:absolute;left:416px;top:529px;width:1px;height:28px;background:#B4B4AC;"></div><div style="position:absolute;left:417px;top:542px;width:6px;height:1px;background:#B4B4AC;"></div><svg style="position:absolute;left:423px;top:538px" width="14" height="9" ><use href="#plus"/></svg><svg style="position:absolute;left:456px;top:535px" width="12" height="15" ><use href="#doc"/></svg><svg style="position:absolute;left:481px;top:533px" width="16" height="16" ><use href="#gear"/></svg><span class="t a" style="left:500px;top:538px;">Part</span><span class="t a lnk" style="left:533px;top:536px;letter-spacing:0.2px;">EV-000158</span><span class="t a" style="left:605px;top:536px;">A</span><span class="t a" style="left:721.5px;top:536px;letter-spacing:0.15px;">Create</span><span class="t a" style="left:769.5px;top:536px;">0</span><span class="t a" style="left:828.5px;top:536px;">0,0</span><span class="t a" style="left:880px;top:536px;">EA</span><div style="position:absolute;left:369px;top:557px;width:30px;height:26px;background:#EEEEEE;"></div><div style="position:absolute;left:400px;top:557px;width:48px;height:26px;background:#EEEEEE;"></div><div style="position:absolute;left:449px;top:557px;width:26px;height:26px;background:#EEEEEE;"></div><div style="position:absolute;left:476px;top:557px;width:51px;height:26px;background:#EEEEEE;"></div><div style="position:absolute;left:528px;top:557px;width:71px;height:26px;background:#EEEEEE;"></div><div style="position:absolute;left:600px;top:557px;width:32px;height:26px;background:#EEEEEE;"></div><div style="position:absolute;left:633px;top:557px;width:82px;height:26px;background:#EEEEEE;"></div><div style="position:absolute;left:716px;top:557px;width:47px;height:26px;background:#EEEEEE;"></div><div style="position:absolute;left:764px;top:557px;width:58px;height:26px;background:#EEEEEE;"></div><div style="position:absolute;left:823px;top:557px;width:51px;height:26px;background:#EEEEEE;"></div><div style="position:absolute;left:875px;top:557px;width:20px;height:26px;background:#EEEEEE;"></div><svg style="position:absolute;left:378px;top:563px" width="13" height="13" ><use href="#cb"/></svg><div style="position:absolute;left:416px;top:556px;width:1px;height:28px;background:#B4B4AC;"></div><div style="position:absolute;left:417px;top:569px;width:6px;height:1px;background:#B4B4AC;"></div><svg style="position:absolute;left:423px;top:565px" width="14" height="9" ><use href="#plus"/></svg><svg style="position:absolute;left:456px;top:562px" width="12" height="15" ><use href="#doc"/></svg><svg style="position:absolute;left:481px;top:560px" width="16" height="16" ><use href="#gear"/></svg><span class="t a" style="left:500px;top:565px;">Part</span><span class="t a lnk" style="left:533px;top:563px;letter-spacing:0.2px;">EV-000158</span><span class="t a" style="left:605px;top:563px;">A</span><span class="t a" style="left:721.5px;top:563px;letter-spacing:0.15px;">Create</span><span class="t a" style="left:769.5px;top:563px;">0</span><span class="t a" style="left:828.5px;top:563px;">0,0</span><span class="t a" style="left:880px;top:563px;">EA</span><div style="position:absolute;left:369px;top:584px;width:30px;height:26px;background:#FFFFFF;"></div><div style="position:absolute;left:400px;top:584px;width:48px;height:26px;background:#FFFFFF;"></div><div style="position:absolute;left:449px;top:584px;width:26px;height:26px;background:#FFFFFF;"></div><div style="position:absolute;left:476px;top:584px;width:51px;height:26px;background:#FFFFFF;"></div><div style="position:absolute;left:528px;top:584px;width:71px;height:26px;background:#FFFFFF;"></div><div style="position:absolute;left:600px;top:584px;width:32px;height:26px;background:#FFFFFF;"></div><div style="position:absolute;left:633px;top:584px;width:82px;height:26px;background:#FFFFFF;"></div><div style="position:absolute;left:716px;top:584px;width:47px;height:26px;background:#FFFFFF;"></div><div style="position:absolute;left:764px;top:584px;width:58px;height:26px;background:#FFFFFF;"></div><div style="position:absolute;left:823px;top:584px;width:51px;height:26px;background:#FFFFFF;"></div><div style="position:absolute;left:875px;top:584px;width:20px;height:26px;background:#FFFFFF;"></div><svg style="position:absolute;left:378px;top:590px" width="13" height="13" ><use href="#cb"/></svg><div style="position:absolute;left:416px;top:583px;width:1px;height:28px;background:#B4B4AC;"></div><div style="position:absolute;left:417px;top:596px;width:6px;height:1px;background:#B4B4AC;"></div><svg style="position:absolute;left:423px;top:592px" width="14" height="9" ><use href="#plus"/></svg><svg style="position:absolute;left:456px;top:589px" width="12" height="15" ><use href="#doc"/></svg><svg style="position:absolute;left:481px;top:587px" width="16" height="16" ><use href="#gear"/></svg><span class="t a" style="left:500px;top:592px;">Part</span><span class="t a lnk" style="left:533px;top:590px;letter-spacing:0.2px;">EV-000158</span><span class="t a" style="left:605px;top:590px;">A</span><span class="t a" style="left:721.5px;top:590px;letter-spacing:0.15px;">Create</span><span class="t a" style="left:769.5px;top:590px;">0</span><span class="t a" style="left:828.5px;top:590px;">0,0</span><span class="t a" style="left:880px;top:590px;">EA</span><div style="position:absolute;left:369px;top:611px;width:30px;height:26px;background:#EEEEEE;"></div><div style="position:absolute;left:400px;top:611px;width:48px;height:26px;background:#EEEEEE;"></div><div style="position:absolute;left:449px;top:611px;width:26px;height:26px;background:#EEEEEE;"></div><div style="position:absolute;left:476px;top:611px;width:51px;height:26px;background:#EEEEEE;"></div><div style="position:absolute;left:528px;top:611px;width:71px;height:26px;background:#EEEEEE;"></div><div style="position:absolute;left:600px;top:611px;width:32px;height:26px;background:#EEEEEE;"></div><div style="position:absolute;left:633px;top:611px;width:82px;height:26px;background:#EEEEEE;"></div><div style="position:absolute;left:716px;top:611px;width:47px;height:26px;background:#EEEEEE;"></div><div style="position:absolute;left:764px;top:611px;width:58px;height:26px;background:#EEEEEE;"></div><div style="position:absolute;left:823px;top:611px;width:51px;height:26px;background:#EEEEEE;"></div><div style="position:absolute;left:875px;top:611px;width:20px;height:26px;background:#EEEEEE;"></div><svg style="position:absolute;left:378px;top:617px" width="13" height="13" ><use href="#cb"/></svg><div style="position:absolute;left:416px;top:610px;width:1px;height:28px;background:#B4B4AC;"></div><div style="position:absolute;left:417px;top:623px;width:6px;height:1px;background:#B4B4AC;"></div><svg style="position:absolute;left:423px;top:619px" width="14" height="9" ><use href="#plus"/></svg><svg style="position:absolute;left:456px;top:616px" width="12" height="15" ><use href="#doc"/></svg><svg style="position:absolute;left:481px;top:614px" width="16" height="16" ><use href="#gear"/></svg><span class="t a" style="left:500px;top:619px;">Part</span><span class="t a lnk" style="left:533px;top:617px;letter-spacing:0.2px;">EV-000158</span><span class="t a" style="left:605px;top:617px;">A</span><span class="t a" style="left:721.5px;top:617px;letter-spacing:0.15px;">Create</span><span class="t a" style="left:769.5px;top:617px;">0</span><span class="t a" style="left:828.5px;top:617px;">0,0</span><span class="t a" style="left:880px;top:617px;">EA</span><div style="position:absolute;left:369px;top:638px;width:30px;height:26px;background:#FFFFFF;"></div><div style="position:absolute;left:400px;top:638px;width:48px;height:26px;background:#FFFFFF;"></div><div style="position:absolute;left:449px;top:638px;width:26px;height:26px;background:#FFFFFF;"></div><div style="position:absolute;left:476px;top:638px;width:51px;height:26px;background:#FFFFFF;"></div><div style="position:absolute;left:528px;top:638px;width:71px;height:26px;background:#FFFFFF;"></div><div style="position:absolute;left:600px;top:638px;width:32px;height:26px;background:#FFFFFF;"></div><div style="position:absolute;left:633px;top:638px;width:82px;height:26px;background:#FFFFFF;"></div><div style="position:absolute;left:716px;top:638px;width:47px;height:26px;background:#FFFFFF;"></div><div style="position:absolute;left:764px;top:638px;width:58px;height:26px;background:#FFFFFF;"></div><div style="position:absolute;left:823px;top:638px;width:51px;height:26px;background:#FFFFFF;"></div><div style="position:absolute;left:875px;top:638px;width:20px;height:26px;background:#FFFFFF;"></div><svg style="position:absolute;left:378px;top:644px" width="13" height="13" ><use href="#cb"/></svg><div style="position:absolute;left:416px;top:637px;width:1px;height:28px;background:#B4B4AC;"></div><div style="position:absolute;left:417px;top:650px;width:6px;height:1px;background:#B4B4AC;"></div><svg style="position:absolute;left:423px;top:646px" width="14" height="9" ><use href="#plus"/></svg><svg style="position:absolute;left:456px;top:643px" width="12" height="15" ><use href="#doc"/></svg><svg style="position:absolute;left:481px;top:641px" width="16" height="16" ><use href="#gear"/></svg><span class="t a" style="left:500px;top:646px;">Part</span><span class="t a lnk" style="left:533px;top:644px;letter-spacing:0.2px;">EV-000158</span><span class="t a" style="left:605px;top:644px;">A</span><span class="t a" style="left:721.5px;top:644px;letter-spacing:0.15px;">Create</span><span class="t a" style="left:769.5px;top:644px;">0</span><span class="t a" style="left:828.5px;top:644px;">0,0</span><span class="t a" style="left:880px;top:644px;">EA</span><div style="position:absolute;left:358px;top:658px;width:564px;height:19px;background:#fff;"></div><div style="position:absolute;left:895px;top:140px;width:27px;height:537px;background:#fff;"></div><div style="position:absolute;left:914px;top:87px;width:8px;height:27px;background:#DDDECC;"></div><div style="position:absolute;left:896px;top:178px;width:17px;height:480px;background:linear-gradient(to right,#F0EEE6,#FBFAF6 40%,#FEFEFC);"></div><svg style="position:absolute;left:896px;top:177px" width="17" height="18" viewBox="0 0 17 18"><rect x="1.5" y="1.5" width="14" height="15" rx="2" fill="#FFFFFF" stroke="#FFFFFF" stroke-width="1"/><path d="M3.5 17.5 H14.5 M16.5 3.5 V15.5" stroke="#8AA8E4" stroke-width="1" fill="none" opacity="0.55"/><rect x="2" y="2" width="13" height="14" rx="1.5" fill="url(#gbtn)"/><rect x="2.5" y="2.5" width="12" height="13" rx="1.5" fill="none" stroke="#A4BCF2" stroke-width="1" opacity="0.7"/><path d="M4.5 10.8 L8.5 6.8 L12.5 10.8" fill="none" stroke="#4D6185" stroke-width="2.4" transform="rotate(0 8.5 9.0)"/></svg><svg style="position:absolute;left:896px;top:640px" width="17" height="18" viewBox="0 0 17 18"><rect x="1.5" y="1.5" width="14" height="15" rx="2" fill="#FFFFFF" stroke="#FFFFFF" stroke-width="1"/><path d="M3.5 17.5 H14.5 M16.5 3.5 V15.5" stroke="#8AA8E4" stroke-width="1" fill="none" opacity="0.55"/><rect x="2" y="2" width="13" height="14" rx="1.5" fill="url(#gbtn)"/><rect x="2.5" y="2.5" width="12" height="13" rx="1.5" fill="none" stroke="#A4BCF2" stroke-width="1" opacity="0.7"/><path d="M4.5 10.8 L8.5 6.8 L12.5 10.8" fill="none" stroke="#4D6185" stroke-width="2.4" transform="rotate(180 8.5 9.0)"/></svg><svg style="position:absolute;left:896px;top:195px" width="17" height="314"><rect x="1.5" y="0.5" width="14" height="313" rx="2" fill="#FFFFFF" stroke="#FFFFFF"/><path d="M16.5 2.5 V312" stroke="#8AA8E4" opacity="0.55"/><rect x="2" y="1" width="13" height="312" rx="1.5" fill="url(#gsb)"/><rect x="2.5" y="1.5" width="12" height="311" rx="1.5" fill="none" stroke="#A4BCF2" opacity="0.7"/><path d="M5.5 153.5 H10.5" stroke="#EEF4FE" stroke-width="1"/><path d="M6.5 154.5 H11.5" stroke="#8CB0F8" stroke-width="1"/><path d="M5.5 155.5 H10.5" stroke="#EEF4FE" stroke-width="1"/><path d="M6.5 156.5 H11.5" stroke="#8CB0F8" stroke-width="1"/><path d="M5.5 157.5 H10.5" stroke="#EEF4FE" stroke-width="1"/><path d="M6.5 158.5 H11.5" stroke="#8CB0F8" stroke-width="1"/><path d="M5.5 159.5 H10.5" stroke="#EEF4FE" stroke-width="1"/><path d="M6.5 160.5 H11.5" stroke="#8CB0F8" stroke-width="1"/></svg><div style="position:absolute;left:896px;top:658px;width:18px;height:19px;background:#ECE9D8;"></div><div style="position:absolute;left:632px;top:659px;width:264px;height:17px;background:linear-gradient(to bottom,#F0EEE6,#FBFAF6 40%,#FEFEFC);"></div><svg style="position:absolute;left:631px;top:659px" width="18" height="17" viewBox="0 0 18 17"><rect x="1.5" y="1.5" width="15" height="14" rx="2" fill="#FFFFFF" stroke="#FFFFFF" stroke-width="1"/><path d="M3.5 16.5 H15.5 M17.5 3.5 V14.5" stroke="#8AA8E4" stroke-width="1" fill="none" opacity="0.55"/><rect x="2" y="2" width="14" height="13" rx="1.5" fill="url(#gbtn)"/><rect x="2.5" y="2.5" width="13" height="12" rx="1.5" fill="none" stroke="#A4BCF2" stroke-width="1" opacity="0.7"/><path d="M5.0 10.3 L9.0 6.3 L13.0 10.3" fill="none" stroke="#4D6185" stroke-width="2.4" transform="rotate(270 9.0 8.5)"/></svg><svg style="position:absolute;left:877px;top:659px" width="18" height="17" viewBox="0 0 18 17"><rect x="1.5" y="1.5" width="15" height="14" rx="2" fill="#FFFFFF" stroke="#FFFFFF" stroke-width="1"/><path d="M3.5 16.5 H15.5 M17.5 3.5 V14.5" stroke="#8AA8E4" stroke-width="1" fill="none" opacity="0.55"/><rect x="2" y="2" width="14" height="13" rx="1.5" fill="url(#gbtn)"/><rect x="2.5" y="2.5" width="13" height="12" rx="1.5" fill="none" stroke="#A4BCF2" stroke-width="1" opacity="0.7"/><path d="M5.0 10.3 L9.0 6.3 L13.0 10.3" fill="none" stroke="#4D6185" stroke-width="2.4" transform="rotate(90 9.0 8.5)"/></svg><svg style="position:absolute;left:649px;top:659px" width="129" height="17"><rect x="0.5" y="1.5" width="128" height="14" rx="2" fill="url(#gsbh)" stroke="#FFFFFF"/><rect x="1" y="2" width="127" height="13" rx="1.5" fill="url(#gsbh)" stroke="#A4BCF2" stroke-width="1"/><path d="M3 16.5 H126" stroke="#8AA8E4" opacity="0.55"/><path d="M60.5 5 V11" stroke="#EEF4FE"/><path d="M61.5 6 V12" stroke="#8CB0F8"/><path d="M62.5 5 V11" stroke="#EEF4FE"/><path d="M63.5 6 V12" stroke="#8CB0F8"/><path d="M64.5 5 V11" stroke="#EEF4FE"/><path d="M65.5 6 V12" stroke="#8CB0F8"/><path d="M66.5 5 V11" stroke="#EEF4FE"/><path d="M67.5 6 V12" stroke="#8CB0F8"/></svg><div style="position:absolute;left:147px;top:693px;width:194px;height:25px;background:#EEEEEE;border:1px solid #808080;border-right-color:#505050;border-bottom-color:#505050;box-sizing:border-box;"></div><div style="position:absolute;left:155px;top:697px;width:16px;height:16px;background:#F0F0F0;border:1px solid #808080;box-sizing:border-box;"></div><svg style="position:absolute;left:160px;top:700px" width="6" height="10"><path d="M5.5 0.5 L0.5 5 L5.5 9.5 Z" fill="#A0A0A0"/></svg><span class="t v" style="left:177px;top:700px;letter-spacing:0.2px;">Page</span><div style="position:absolute;left:209px;top:695px;width:38px;height:21px;background:#fff;border:1px solid #7F9DB9;box-sizing:border-box;"></div><span class="t " style="left:216px;top:699px;font-family:'Liberation Sans',sans-serif;font-size:12px;">1</span><svg style="position:absolute;left:229px;top:698px" width="15" height="15" viewBox="0 0 15 15"><rect x="0" y="0" width="15" height="15" rx="1.5" fill="url(#gbtn)"/><path d="M3.5 5.3 L7.5 9.3 L11.5 5.3" fill="none" stroke="#4D6185" stroke-width="2.5"/></svg><span class="t v" style="left:251px;top:700px;letter-spacing:0.5px;">of 6</span><div style="position:absolute;left:279px;top:697px;width:16px;height:16px;background:#F0F0F0;border:1px solid #404040;box-sizing:border-box;"></div><svg style="position:absolute;left:285px;top:700px" width="6" height="10"><path d="M0.5 0.5 L5.5 5 L0.5 9.5 Z" fill="#0A1A7A"/></svg><div style="position:absolute;left:301px;top:696px;width:32px;height:17px;background:#F4F4F4;border:1px solid #707070;box-sizing:border-box;"></div><div style="position:absolute;left:301px;top:696px;width:16px;height:17px;background:#B8B8B8;border:1px solid #2A2A2A;box-sizing:border-box;box-shadow:inset 1px 1px 0 #5A5A5A;"></div><svg style="position:absolute;left:304px;top:700px" width="11" height="12"><rect x="1.2" y="0.8" width="6" height="8" fill="#FFFFFF" stroke="#000" stroke-width="1.3"/><rect x="4.2" y="3.6" width="5.4" height="7.6" fill="#D0D0D0" stroke="#000" stroke-width="1.4"/></svg><svg style="position:absolute;left:321px;top:700px" width="9" height="10"><rect x="0.7" y="0.7" width="7" height="8.4" fill="#fff" stroke="#111" stroke-width="1.3"/><path d="M2.5 2.8 H6 M2.5 4.8 H6 M2.5 6.8 H6" stroke="#888"/></svg><div style="position:absolute;left:715px;top:693px;width:194px;height:25px;background:#EEEEEE;border:1px solid #808080;border-right-color:#505050;border-bottom-color:#505050;box-sizing:border-box;"></div><div style="position:absolute;left:723px;top:697px;width:16px;height:16px;background:#F0F0F0;border:1px solid #808080;box-sizing:border-box;"></div><svg style="position:absolute;left:728px;top:700px" width="6" height="10"><path d="M5.5 0.5 L0.5 5 L5.5 9.5 Z" fill="#A0A0A0"/></svg><span class="t v" style="left:745px;top:700px;letter-spacing:0.2px;">Page</span><div style="position:absolute;left:777px;top:695px;width:38px;height:21px;background:#fff;border:1px solid #7F9DB9;box-sizing:border-box;"></div><span class="t " style="left:784px;top:699px;font-family:'Liberation Sans',sans-serif;font-size:12px;">1</span><svg style="position:absolute;left:797px;top:698px" width="15" height="15" viewBox="0 0 15 15"><rect x="0" y="0" width="15" height="15" rx="1.5" fill="url(#gbtn)"/><path d="M3.5 5.3 L7.5 9.3 L11.5 5.3" fill="none" stroke="#4D6185" stroke-width="2.5"/></svg><span class="t v" style="left:819px;top:700px;letter-spacing:0.5px;">of 2</span><div style="position:absolute;left:847px;top:697px;width:16px;height:16px;background:#F0F0F0;border:1px solid #404040;box-sizing:border-box;"></div><svg style="position:absolute;left:853px;top:700px" width="6" height="10"><path d="M0.5 0.5 L5.5 5 L0.5 9.5 Z" fill="#0A1A7A"/></svg><div style="position:absolute;left:869px;top:696px;width:32px;height:17px;background:#F4F4F4;border:1px solid #707070;box-sizing:border-box;"></div><div style="position:absolute;left:869px;top:696px;width:16px;height:17px;background:#B8B8B8;border:1px solid #2A2A2A;box-sizing:border-box;box-shadow:inset 1px 1px 0 #5A5A5A;"></div><svg style="position:absolute;left:872px;top:700px" width="11" height="12"><rect x="1.2" y="0.8" width="6" height="8" fill="#FFFFFF" stroke="#000" stroke-width="1.3"/><rect x="4.2" y="3.6" width="5.4" height="7.6" fill="#D0D0D0" stroke="#000" stroke-width="1.4"/></svg><svg style="position:absolute;left:889px;top:700px" width="9" height="10"><rect x="0.7" y="0.7" width="7" height="8.4" fill="#fff" stroke="#111" stroke-width="1.3"/><path d="M2.5 2.8 H6 M2.5 4.8 H6 M2.5 6.8 H6" stroke="#888"/></svg><div style="position:absolute;left:0px;top:727px;width:924px;height:22px;background:linear-gradient(to bottom,#D8D6C2 0px,#E6E3D0 2px,#ECE9D8 4px,#EDEAD9 100%);border-top:1px solid #A8A694;box-sizing:border-box;"></div><span class="t " style="left:15.5px;top:732px;font-family:'Liberation Sans',sans-serif;font-size:11px;border-bottom:1px dashed #333;line-height:12px;letter-spacing:-0.1px;">Adblock</span><div style="position:absolute;left:69px;top:730px;width:1px;height:18px;background:#C8C5B2;border-right:1px solid #fff;"></div><span class="t " style="left:77px;top:732px;font-family:'Liberation Sans',sans-serif;font-size:11px;">javascript:tvcDoBuildStructure()</span><div style="position:absolute;left:906px;top:730px;width:1px;height:18px;background:#C8C5B2;border-right:1px solid #fff;"></div><svg style="position:absolute;left:909px;top:736px" width="12" height="12"><rect x="9" y="1" width="2" height="2" fill="#B8B4A0"/><rect x="5" y="5" width="2" height="2" fill="#B8B4A0"/><rect x="9" y="5" width="2" height="2" fill="#B8B4A0"/><rect x="1" y="9" width="2" height="2" fill="#B8B4A0"/><rect x="5" y="9" width="2" height="2" fill="#B8B4A0"/><rect x="9" y="9" width="2" height="2" fill="#B8B4A0"/></svg></div></body></html>
